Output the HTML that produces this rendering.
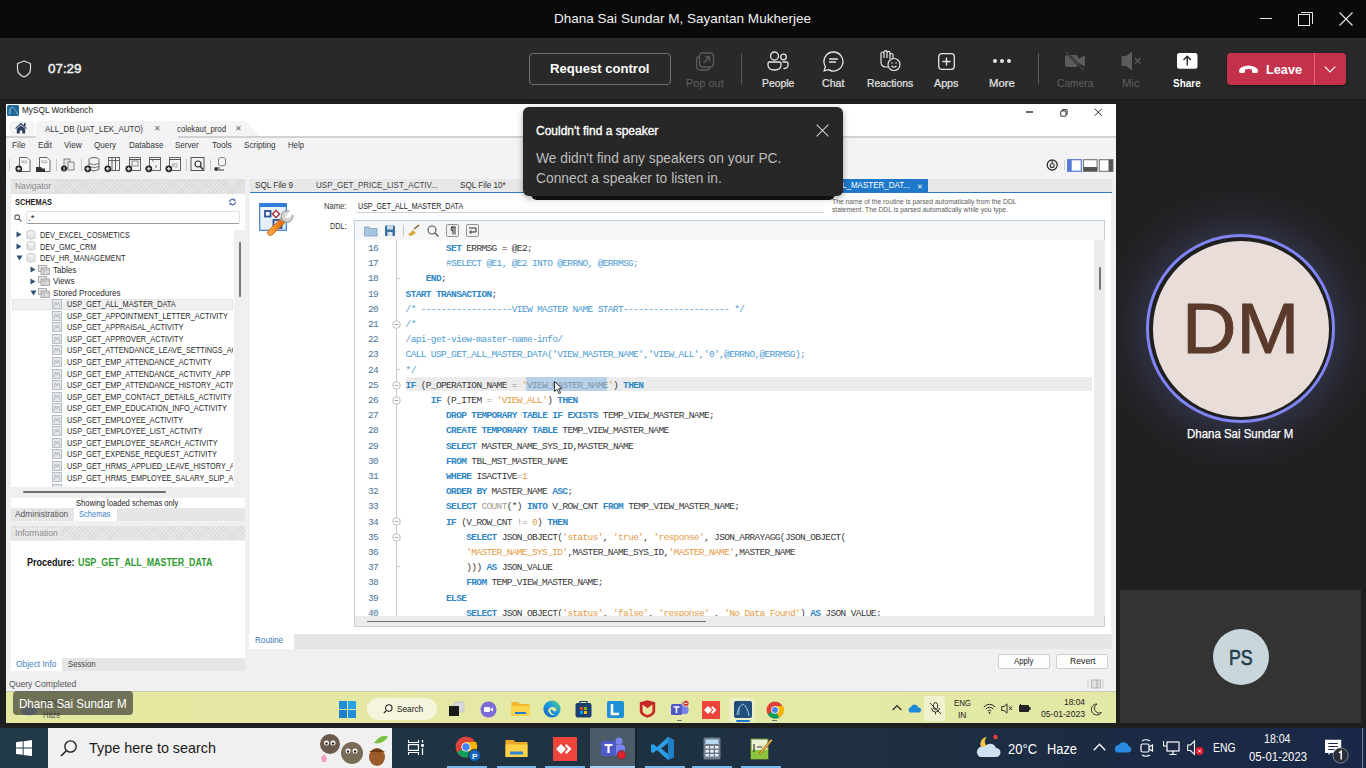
<!DOCTYPE html><html><head><meta charset="utf-8"><style>
html,body{margin:0;padding:0;width:1366px;height:768px;overflow:hidden;background:#1f1f1f;position:relative;font-family:"Liberation Sans",sans-serif}
</style></head><body>
<div style="position:absolute;left:0px;top:0px;width:1366px;height:38px;background:#0a0a0a"></div>
<div style="position:absolute;left:0px;top:38px;width:1366px;height:61px;background:#292929"></div>
<div style="position:absolute;left:554.00px;top:10.12px;line-height:18px;font-size:13.5px;font-family:'Liberation Sans', sans-serif;font-weight:400;color:#f0f0f0;letter-spacing:0.000px;white-space:pre;transform:scaleX(1.0013);transform-origin:0 0;">Dhana Sai Sundar M, Sayantan Mukherjee</div>
<div style="position:absolute;left:1260px;top:18px;width:12px;height:1px;background:#e6e6e6"></div>
<svg style="position:absolute;left:1298px;top:11px" width="16" height="16" viewBox="0 0 16 16"><rect x="0.5" y="3.5" width="11" height="11" fill="none" stroke="#e6e6e6"/><path d="M3 1.5H14.5V13" fill="none" stroke="#e6e6e6"/></svg>
<svg style="position:absolute;left:1339px;top:12px" width="14" height="14" viewBox="0 0 14 14"><path d="M0.5 0.5L13.5 13.5M13.5 0.5L0.5 13.5" stroke="#e6e6e6" stroke-width="1.1"/></svg>
<svg style="position:absolute;left:16px;top:60px" width="16" height="18" viewBox="0 0 16 18"><path d="M8 1 L14.5 3.6 V9 C14.5 12.8 11.6 15.6 8 17 C4.4 15.6 1.5 12.8 1.5 9 V3.6 Z" fill="none" stroke="#e8e8e8" stroke-width="1.1"/></svg>
<div style="position:absolute;left:47.50px;top:60.22px;line-height:18px;font-size:13.5px;font-family:'Liberation Sans', sans-serif;font-weight:400;color:#f2f2f2;letter-spacing:0.000px;white-space:pre;transform:scaleX(0.9916);transform-origin:0 0;-webkit-text-stroke:0.45px #f2f2f2;">07:29</div>
<div style="position:absolute;left:529px;top:53px;width:140px;height:30px;border:1px solid #6e6e6e;border-radius:4px"></div>
<div style="position:absolute;left:550.00px;top:60.02px;line-height:18px;font-size:13.5px;font-family:'Liberation Sans', sans-serif;font-weight:700;color:#ffffff;letter-spacing:0.000px;white-space:pre;transform:scaleX(0.9683);transform-origin:0 0;">Request control</div>
<div style="position:absolute;left:685.50px;top:75.76px;line-height:14px;font-size:10.8px;font-family:'Liberation Sans', sans-serif;font-weight:400;color:#5f5f5f;letter-spacing:0.000px;white-space:pre;transform:scaleX(1.0126);transform-origin:0 0;">Pop out</div>
<div style="position:absolute;left:741px;top:53px;width:1px;height:31px;background:#5a5a5a"></div>
<div style="position:absolute;left:761.70px;top:75.76px;line-height:14px;font-size:10.8px;font-family:'Liberation Sans', sans-serif;font-weight:400;color:#e6e6e6;letter-spacing:0.000px;white-space:pre;transform:scaleX(0.9604);transform-origin:0 0;-webkit-text-stroke:0.2px #e6e6e6;">People</div>
<div style="position:absolute;left:822.30px;top:75.76px;line-height:14px;font-size:10.8px;font-family:'Liberation Sans', sans-serif;font-weight:400;color:#e6e6e6;letter-spacing:0.000px;white-space:pre;transform:scaleX(0.9819);transform-origin:0 0;-webkit-text-stroke:0.2px #e6e6e6;">Chat</div>
<div style="position:absolute;left:866.60px;top:75.76px;line-height:14px;font-size:10.8px;font-family:'Liberation Sans', sans-serif;font-weight:400;color:#e6e6e6;letter-spacing:0.000px;white-space:pre;transform:scaleX(0.9599);transform-origin:0 0;-webkit-text-stroke:0.2px #e6e6e6;">Reactions</div>
<div style="position:absolute;left:933.80px;top:75.76px;line-height:14px;font-size:10.8px;font-family:'Liberation Sans', sans-serif;font-weight:400;color:#e6e6e6;letter-spacing:0.000px;white-space:pre;transform:scaleX(0.9912);transform-origin:0 0;-webkit-text-stroke:0.2px #e6e6e6;">Apps</div>
<div style="position:absolute;left:989.00px;top:75.76px;line-height:14px;font-size:10.8px;font-family:'Liberation Sans', sans-serif;font-weight:400;color:#e6e6e6;letter-spacing:0.000px;white-space:pre;transform:scaleX(1.0485);transform-origin:0 0;-webkit-text-stroke:0.2px #e6e6e6;">More</div>
<div style="position:absolute;left:1038px;top:53px;width:1px;height:31px;background:#5a5a5a"></div>
<div style="position:absolute;left:1056.80px;top:75.76px;line-height:14px;font-size:10.8px;font-family:'Liberation Sans', sans-serif;font-weight:400;color:#5f5f5f;letter-spacing:0.000px;white-space:pre;transform:scaleX(0.9502);transform-origin:0 0;">Camera</div>
<div style="position:absolute;left:1122.30px;top:75.76px;line-height:14px;font-size:10.8px;font-family:'Liberation Sans', sans-serif;font-weight:400;color:#5f5f5f;letter-spacing:0.000px;white-space:pre;transform:scaleX(1.0538);transform-origin:0 0;">Mic</div>
<div style="position:absolute;left:1173.00px;top:75.76px;line-height:14px;font-size:10.8px;font-family:'Liberation Sans', sans-serif;font-weight:700;color:#ffffff;letter-spacing:0.000px;white-space:pre;transform:scaleX(0.9228);transform-origin:0 0;">Share</div>
<div style="position:absolute;left:1227px;top:53px;width:119px;height:32px;background:#c4314b;border-radius:4px;box-shadow:0 1px 3px rgba(0,0,0,.4)"></div>
<div style="position:absolute;left:1314px;top:53px;width:1px;height:32px;background:#e8647a"></div>
<div style="position:absolute;left:1266.00px;top:60.52px;line-height:18px;font-size:13.5px;font-family:'Liberation Sans', sans-serif;font-weight:700;color:#ffffff;letter-spacing:0.000px;white-space:pre;transform:scaleX(0.9404);transform-origin:0 0;">Leave</div>
<div style="position:absolute;left:1116px;top:99px;width:250px;height:629px;background:#1f1f1f"></div>
<div style="position:absolute;left:6px;top:104px;width:1110px;height:619px;background:#f0f0f3"></div>
<div style="position:absolute;left:6px;top:104px;width:1110px;height:33px;background:#ffffff"></div>
<div style="position:absolute;left:6px;top:104px;width:1110px;height:17px;background:#ffffff"></div>
<svg style="position:absolute;left:7px;top:105px" width="12" height="11" viewBox="0 0 12 11"><rect x="0" y="0" width="12" height="11" rx="1.5" fill="#1f6a96"/><path d="M2 9 C3 5 4 3 5 2 C7 3 9 5 10.5 9.5" fill="none" stroke="#8fc3e0" stroke-width="0.9"/><path d="M3 9.5 L3 3" stroke="#8fc3e0" stroke-width="0.7"/></svg>
<div style="position:absolute;left:22.00px;top:104.38px;line-height:12px;font-size:9px;font-family:'Liberation Sans', sans-serif;font-weight:400;color:#1a1a1a;letter-spacing:0.000px;white-space:pre;transform:scaleX(0.9158);transform-origin:0 0;">MySQL Workbench</div>
<div style="position:absolute;left:1026.4px;top:111.3px;width:7px;height:1.4px;background:#666"></div>
<svg style="position:absolute;left:1059.5px;top:108.5px" width="8" height="8" viewBox="0 0 8 8"><rect x="0.7" y="2" width="5.3" height="5.3" rx="1" fill="none" stroke="#444" stroke-width="1.1"/><path d="M2.2 2V1.5Q2.2 0.6 3 0.6H6.2Q7.2 0.6 7.2 1.6V4.8Q7.2 5.7 6.2 5.7" fill="none" stroke="#444" stroke-width="1.1"/></svg>
<svg style="position:absolute;left:1093.5px;top:108.3px" width="8.5" height="8.5" viewBox="0 0 8.5 8.5"><path d="M0.6 0.6L7.9 7.9M7.9 0.6L0.6 7.9" stroke="#333" stroke-width="1"/></svg>
<div style="position:absolute;left:6px;top:121px;width:1110px;height:16px;background:#ffffff"></div>
<div style="position:absolute;left:9px;top:121px;width:26px;height:16px;background:#f4f4f4;border-radius:5px 5px 0 0"></div>
<svg style="position:absolute;left:14px;top:122px" width="14" height="12" viewBox="0 0 14 12"><path d="M7 0.8 L0.8 6.5 L2.3 6.5 L7 2.6 L11.7 6.5 L13.2 6.5 Z" fill="#2d3f5f"/><path d="M2.8 6.8 L7 3.4 L11.2 6.8 V11.5 H8.3 V8.5 H5.7 V11.5 H2.8 Z" fill="#2d3f5f"/><rect x="10" y="1" width="1.6" height="3" fill="#2d3f5f"/></svg>
<svg style="position:absolute;left:36px;top:121px" width="145" height="17" viewBox="0 0 145 17"><path d="M0 17 V4 Q0 0 5 0 H127 Q131 0 133 2 L145 17 Z" fill="#f3f3f6"/></svg>
<svg style="position:absolute;left:168px;top:121px" width="92" height="17" viewBox="0 0 92 17"><path d="M0 0 H74 Q78 0 80 2 L92 16 H12 Z" fill="#f4f4f4"/></svg>
<div style="position:absolute;left:6px;top:136px;width:30px;height:1.5px;background:#d2d2d2"></div>
<div style="position:absolute;left:178px;top:136px;width:938px;height:1.5px;background:#d2d2d2"></div>
<div style="position:absolute;left:45.00px;top:122.51px;line-height:12px;font-size:9.5px;font-family:'Liberation Sans', sans-serif;font-weight:400;color:#333;letter-spacing:0.000px;white-space:pre;transform:scaleX(0.8348);transform-origin:0 0;">ALL_DB (UAT_LEK_AUTO)</div>
<div style="position:absolute;left:153.50px;top:123.73px;line-height:10px;font-size:8px;font-family:'Liberation Sans', sans-serif;font-weight:400;color:#666;letter-spacing:0.000px;white-space:pre;">✕</div>
<div style="position:absolute;left:177.30px;top:122.51px;line-height:12px;font-size:9.5px;font-family:'Liberation Sans', sans-serif;font-weight:400;color:#333;letter-spacing:0.000px;white-space:pre;transform:scaleX(0.8210);transform-origin:0 0;">colekaut_prod</div>
<div style="position:absolute;left:234.50px;top:123.73px;line-height:10px;font-size:8px;font-family:'Liberation Sans', sans-serif;font-weight:400;color:#666;letter-spacing:0.000px;white-space:pre;">✕</div>
<div style="position:absolute;left:6px;top:137.5px;width:1110px;height:41px;background:#f3f3f6"></div>
<div style="position:absolute;left:11.90px;top:139.21px;line-height:12px;font-size:9.5px;font-family:'Liberation Sans', sans-serif;font-weight:400;color:#333;letter-spacing:0.000px;white-space:pre;transform:scaleX(0.8819);transform-origin:0 0;">File</div>
<div style="position:absolute;left:37.80px;top:139.21px;line-height:12px;font-size:9.5px;font-family:'Liberation Sans', sans-serif;font-weight:400;color:#333;letter-spacing:0.000px;white-space:pre;transform:scaleX(0.8491);transform-origin:0 0;">Edit</div>
<div style="position:absolute;left:64.20px;top:139.21px;line-height:12px;font-size:9.5px;font-family:'Liberation Sans', sans-serif;font-weight:400;color:#333;letter-spacing:0.000px;white-space:pre;transform:scaleX(0.8717);transform-origin:0 0;">View</div>
<div style="position:absolute;left:94.00px;top:139.21px;line-height:12px;font-size:9.5px;font-family:'Liberation Sans', sans-serif;font-weight:400;color:#333;letter-spacing:0.000px;white-space:pre;transform:scaleX(0.8581);transform-origin:0 0;">Query</div>
<div style="position:absolute;left:128.60px;top:139.21px;line-height:12px;font-size:9.5px;font-family:'Liberation Sans', sans-serif;font-weight:400;color:#333;letter-spacing:0.000px;white-space:pre;transform:scaleX(0.8459);transform-origin:0 0;">Database</div>
<div style="position:absolute;left:174.90px;top:139.21px;line-height:12px;font-size:9.5px;font-family:'Liberation Sans', sans-serif;font-weight:400;color:#333;letter-spacing:0.000px;white-space:pre;transform:scaleX(0.8434);transform-origin:0 0;">Server</div>
<div style="position:absolute;left:212.00px;top:139.21px;line-height:12px;font-size:9.5px;font-family:'Liberation Sans', sans-serif;font-weight:400;color:#333;letter-spacing:0.000px;white-space:pre;transform:scaleX(0.8928);transform-origin:0 0;">Tools</div>
<div style="position:absolute;left:243.80px;top:139.21px;line-height:12px;font-size:9.5px;font-family:'Liberation Sans', sans-serif;font-weight:400;color:#333;letter-spacing:0.000px;white-space:pre;transform:scaleX(0.8549);transform-origin:0 0;">Scripting</div>
<div style="position:absolute;left:288.00px;top:139.21px;line-height:12px;font-size:9.5px;font-family:'Liberation Sans', sans-serif;font-weight:400;color:#333;letter-spacing:0.000px;white-space:pre;transform:scaleX(0.8189);transform-origin:0 0;">Help</div>
<svg style="position:absolute;left:15px;top:156px" width="17" height="17" viewBox="0 0 17 17"><path d="M4.5 1.5 H12 L15 4.5 V15.5 H4.5 Z" fill="#fafafa" stroke="#555" stroke-width="0.9"/><text x="6" y="6.5" font-size="3.5" fill="#666" font-family="Liberation Sans">SQL</text><circle cx="3.8" cy="12.8" r="3.4" fill="#2a2a2a"/><path d="M2 12.8H5.6M3.8 11V14.6" stroke="#fff" stroke-width="1"/></svg>
<svg style="position:absolute;left:35px;top:156px" width="17" height="17" viewBox="0 0 17 17"><path d="M4.5 1.5 H12 L15 4.5 V15.5 H4.5 Z" fill="#fafafa" stroke="#555" stroke-width="0.9"/><text x="6" y="6.5" font-size="3.5" fill="#666" font-family="Liberation Sans">SQL</text><path d="M1 11 H6 L7 12.5 H10 V16 H1 Z" fill="#333"/></svg>
<svg style="position:absolute;left:59px;top:156px" width="17" height="17" viewBox="0 0 17 17"><rect x="5" y="3" width="6" height="9" fill="#e6e6e6" stroke="#666" stroke-width="0.8"/><rect x="9" y="6" width="6" height="8" fill="#eee" stroke="#666" stroke-width="0.8"/><circle cx="5" cy="12.5" r="3" fill="#222"/><rect x="4.6" y="11" width="0.9" height="3.5" fill="#fff"/></svg>
<svg style="position:absolute;left:84px;top:156px" width="17" height="17" viewBox="0 0 17 17"><ellipse cx="10" cy="3.5" rx="5" ry="2" fill="#f3f3f3" stroke="#555" stroke-width="0.9"/><path d="M5 3.5 V13.5 Q10 16.5 15 13.5 V3.5" fill="#f3f3f3" stroke="#555" stroke-width="0.9"/><path d="M5 7.5 Q10 10 15 7.5 M5 10.5 Q10 13 15 10.5" fill="none" stroke="#555" stroke-width="0.8"/><circle cx="3.8" cy="12.8" r="3.4" fill="#2a2a2a"/><path d="M2 12.8H5.6M3.8 11V14.6" stroke="#fff" stroke-width="1"/></svg>
<svg style="position:absolute;left:104px;top:156px" width="17" height="17" viewBox="0 0 17 17"><rect x="4.5" y="1.5" width="11" height="13" fill="#f3f3f3" stroke="#555" stroke-width="0.9"/><path d="M8 1.5V14.5M11.5 1.5V14.5M4.5 4.5H15.5" stroke="#555" stroke-width="0.9"/><circle cx="3.8" cy="12.8" r="3.4" fill="#2a2a2a"/><path d="M2 12.8H5.6M3.8 11V14.6" stroke="#fff" stroke-width="1"/></svg>
<svg style="position:absolute;left:125px;top:156px" width="17" height="17" viewBox="0 0 17 17"><rect x="4.5" y="1.5" width="11" height="13" fill="#f3f3f3" stroke="#555" stroke-width="0.9"/><rect x="7" y="5" width="6" height="5" fill="none" stroke="#777" stroke-width="0.8"/><path d="M4.5 3.5H15.5" stroke="#555"/><circle cx="3.8" cy="12.8" r="3.4" fill="#2a2a2a"/><path d="M2 12.8H5.6M3.8 11V14.6" stroke="#fff" stroke-width="1"/></svg>
<svg style="position:absolute;left:145px;top:156px" width="17" height="17" viewBox="0 0 17 17"><rect x="4.5" y="1.5" width="11" height="13" fill="#f3f3f3" stroke="#555" stroke-width="0.9"/><path d="M7 4 L9 6 M11 9 V12" stroke="#777" stroke-width="0.9"/><path d="M4.5 3.5H15.5" stroke="#555"/><circle cx="3.8" cy="12.8" r="3.4" fill="#2a2a2a"/><path d="M2 12.8H5.6M3.8 11V14.6" stroke="#fff" stroke-width="1"/></svg>
<svg style="position:absolute;left:165px;top:156px" width="17" height="17" viewBox="0 0 17 17"><rect x="4.5" y="1.5" width="11" height="13" fill="#f3f3f3" stroke="#555" stroke-width="0.9"/><text x="7" y="11" font-size="6" fill="#777" font-family="Liberation Sans">f()</text><path d="M4.5 3.5H15.5" stroke="#555"/><circle cx="3.8" cy="12.8" r="3.4" fill="#2a2a2a"/><path d="M2 12.8H5.6M3.8 11V14.6" stroke="#fff" stroke-width="1"/></svg>
<svg style="position:absolute;left:189px;top:156px" width="17" height="17" viewBox="0 0 17 17"><rect x="2" y="1.5" width="13" height="13" fill="#f3f3f3" stroke="#555" stroke-width="1"/><circle cx="9" cy="8" r="3" fill="none" stroke="#333" stroke-width="1.2"/><path d="M11 10 L14 13.5" stroke="#333" stroke-width="1.5"/></svg>
<svg style="position:absolute;left:212px;top:156px" width="17" height="17" viewBox="0 0 17 17"><ellipse cx="10" cy="3" rx="3.5" ry="1.5" fill="#f3f3f3" stroke="#666" stroke-width="0.8"/><path d="M6.5 3 V9 Q10 11 13.5 9 V3" fill="#f3f3f3" stroke="#666" stroke-width="0.8"/><path d="M3 12 L8 12 M3 14 L12 14" stroke="#333" stroke-width="1"/><circle cx="4" cy="13" r="1.8" fill="#333"/></svg>
<div style="position:absolute;left:8.5px;top:159px;width:1px;height:12px;background:#c8c8c8"></div>
<div style="position:absolute;left:55.5px;top:159px;width:1px;height:12px;background:#c8c8c8"></div>
<div style="position:absolute;left:80.5px;top:159px;width:1px;height:12px;background:#c8c8c8"></div>
<div style="position:absolute;left:186px;top:159px;width:1px;height:12px;background:#c8c8c8"></div>
<div style="position:absolute;left:209.5px;top:159px;width:1px;height:12px;background:#c8c8c8"></div>
<div style="position:absolute;left:10.5px;top:178.5px;width:234.5px;height:15.5px;background:#e6e6e6;background-image:repeating-linear-gradient(45deg,rgba(0,0,0,.035) 0 1px,transparent 1px 3px),repeating-linear-gradient(-45deg,rgba(0,0,0,.035) 0 1px,transparent 1px 3px)"></div>
<div style="position:absolute;left:12px;top:180.5px;width:42px;height:11px;background:#e6e6e6"></div>
<div style="position:absolute;left:15.20px;top:180.21px;line-height:12px;font-size:9.5px;font-family:'Liberation Sans', sans-serif;font-weight:400;color:#8a8a8a;letter-spacing:0.000px;white-space:pre;transform:scaleX(0.8854);transform-origin:0 0;">Navigator</div>
<div style="position:absolute;left:10.5px;top:194px;width:234.5px;height:293px;background:#ffffff"></div>
<div style="position:absolute;left:14.90px;top:196.08px;line-height:12px;font-size:9.3px;font-family:'Liberation Sans', sans-serif;font-weight:700;color:#1a1a1a;letter-spacing:0.000px;white-space:pre;transform:scaleX(0.7934);transform-origin:0 0;">SCHEMAS</div>
<svg style="position:absolute;left:228px;top:198px" width="9" height="8" viewBox="0 0 9 8"><path d="M1.5 4 A3 3 0 0 1 7 2.5 M7.5 4 A3 3 0 0 1 2 5.5" fill="none" stroke="#4a6fa5" stroke-width="1.3"/><path d="M6 0.5 L8 2.8 L5.5 3.3Z M3 7.5 L1 5.2 L3.5 4.7Z" fill="#4a6fa5"/></svg>
<svg style="position:absolute;left:14px;top:214px" width="8" height="8" viewBox="0 0 8 8"><circle cx="3.2" cy="3.2" r="2.3" fill="none" stroke="#666" stroke-width="1.1"/><path d="M5 5 L7.5 7.5" stroke="#666" stroke-width="1.3"/></svg>
<div style="position:absolute;left:25.7px;top:211px;width:214.5px;height:13px;background:#fff;border:1px solid #e0e0e0;border-bottom:1.5px solid #9a9a9a;box-sizing:border-box;border-radius:2px"></div>
<div style="position:absolute;left:28.00px;top:212.21px;line-height:12px;font-size:9.5px;font-family:'Liberation Sans', sans-serif;font-weight:400;color:#222;letter-spacing:0.000px;white-space:pre;">.*</div>
<div style="position:absolute;left:234px;top:229.5px;width:11px;height:257px;background:#efefef"></div>
<div style="position:absolute;left:238.8px;top:241.6px;width:2px;height:55.7px;background:#777;border-radius:1px"></div>
<div style="position:absolute;left:11.5px;top:299px;width:221px;height:11px;background:#f0f0f0;border:1px solid #e4e4e4;box-sizing:border-box"></div>
<div style="position:absolute;left:10.5px;top:229.5px;width:222px;height:257px;overflow:hidden">

<svg style="position:absolute;left:5.0px;top:1.9000000000000057px" width="6" height="7" viewBox="0 0 6 7"><path d="M0.5 0.5 V6.5 L5.5 3.5Z" fill="#2f4f73"/></svg>
<svg style="position:absolute;left:15.0px;top:0.4000000000000057px" width="10" height="10" viewBox="0 0 10 10"><ellipse cx="5" cy="2" rx="4" ry="1.5" fill="#f2f2f2" stroke="#bbb" stroke-width="0.8"/><path d="M1 2 V8 Q5 10.5 9 8 V2" fill="#f2f2f2" stroke="#bbb" stroke-width="0.8"/><path d="M1 4.5 Q5 6.5 9 4.5 M1 6.5 Q5 8.5 9 6.5" fill="none" stroke="#ccc" stroke-width="0.6"/></svg>
<div style="position:absolute;left:29.10px;top:-0.52px;line-height:12px;font-size:9px;font-family:'Liberation Sans', sans-serif;font-weight:400;color:#2a2a2a;letter-spacing:0.000px;white-space:pre;transform:scaleX(0.8050);transform-origin:0 0;">DEV_EXCEL_COSMETICS</div>

<svg style="position:absolute;left:5.0px;top:13.450000000000017px" width="6" height="7" viewBox="0 0 6 7"><path d="M0.5 0.5 V6.5 L5.5 3.5Z" fill="#2f4f73"/></svg>
<svg style="position:absolute;left:15.0px;top:11.950000000000017px" width="10" height="10" viewBox="0 0 10 10"><ellipse cx="5" cy="2" rx="4" ry="1.5" fill="#f2f2f2" stroke="#bbb" stroke-width="0.8"/><path d="M1 2 V8 Q5 10.5 9 8 V2" fill="#f2f2f2" stroke="#bbb" stroke-width="0.8"/><path d="M1 4.5 Q5 6.5 9 4.5 M1 6.5 Q5 8.5 9 6.5" fill="none" stroke="#ccc" stroke-width="0.6"/></svg>
<div style="position:absolute;left:29.10px;top:11.03px;line-height:12px;font-size:9px;font-family:'Liberation Sans', sans-serif;font-weight:400;color:#2a2a2a;letter-spacing:0.000px;white-space:pre;transform:scaleX(0.8050);transform-origin:0 0;">DEV_GMC_CRM</div>

<svg style="position:absolute;left:5.0px;top:25.5px" width="7" height="6" viewBox="0 0 7 6"><path d="M0.5 0.5 H6.5 L3.5 5.5Z" fill="#2f4f73"/></svg>
<svg style="position:absolute;left:15.0px;top:23.5px" width="10" height="10" viewBox="0 0 10 10"><ellipse cx="5" cy="2" rx="4" ry="1.5" fill="#f2f2f2" stroke="#bbb" stroke-width="0.8"/><path d="M1 2 V8 Q5 10.5 9 8 V2" fill="#f2f2f2" stroke="#bbb" stroke-width="0.8"/><path d="M1 4.5 Q5 6.5 9 4.5 M1 6.5 Q5 8.5 9 6.5" fill="none" stroke="#ccc" stroke-width="0.6"/></svg>
<div style="position:absolute;left:29.10px;top:22.58px;line-height:12px;font-size:9px;font-family:'Liberation Sans', sans-serif;font-weight:400;color:#2a2a2a;letter-spacing:0.000px;white-space:pre;transform:scaleX(0.8050);transform-origin:0 0;">DEV_HR_MANAGEMENT</div>
<svg style="position:absolute;left:19.0px;top:36.55000000000001px" width="6" height="7" viewBox="0 0 6 7"><path d="M0.5 0.5 V6.5 L5.5 3.5Z" fill="#2f4f73"/></svg>
<svg style="position:absolute;left:27.0px;top:35.05000000000001px" width="12" height="10" viewBox="0 0 12 10"><rect x="0.5" y="0.5" width="8" height="6" fill="#e8e8e8" stroke="#999" stroke-width="0.8"/><rect x="3" y="3" width="8.5" height="6.5" fill="#dcdcdc" stroke="#999" stroke-width="0.8"/><path d="M3 5H11.5 M6 3V9.5" stroke="#aaa" stroke-width="0.6"/></svg>
<div style="position:absolute;left:42.50px;top:34.13px;line-height:12px;font-size:9px;font-family:'Liberation Sans', sans-serif;font-weight:400;color:#2a2a2a;letter-spacing:0.000px;white-space:pre;transform:scaleX(0.9000);transform-origin:0 0;">Tables</div>
<svg style="position:absolute;left:19.0px;top:48.10000000000002px" width="6" height="7" viewBox="0 0 6 7"><path d="M0.5 0.5 V6.5 L5.5 3.5Z" fill="#2f4f73"/></svg>
<svg style="position:absolute;left:27.0px;top:46.60000000000002px" width="12" height="10" viewBox="0 0 12 10"><rect x="0.5" y="0.5" width="8" height="6" fill="#e8e8e8" stroke="#999" stroke-width="0.8"/><rect x="3" y="3" width="8.5" height="6.5" fill="#dcdcdc" stroke="#999" stroke-width="0.8"/><path d="M3 5H11.5 M6 3V9.5" stroke="#aaa" stroke-width="0.6"/></svg>
<div style="position:absolute;left:42.50px;top:45.68px;line-height:12px;font-size:9px;font-family:'Liberation Sans', sans-serif;font-weight:400;color:#2a2a2a;letter-spacing:0.000px;white-space:pre;transform:scaleX(0.9000);transform-origin:0 0;">Views</div>
<svg style="position:absolute;left:19.0px;top:60.14999999999998px" width="7" height="6" viewBox="0 0 7 6"><path d="M0.5 0.5 H6.5 L3.5 5.5Z" fill="#2f4f73"/></svg>
<svg style="position:absolute;left:27.0px;top:58.14999999999998px" width="12" height="10" viewBox="0 0 12 10"><rect x="0.5" y="0.5" width="8" height="6" fill="#e8e8e8" stroke="#999" stroke-width="0.8"/><rect x="3" y="3" width="8.5" height="6.5" fill="#dcdcdc" stroke="#999" stroke-width="0.8"/><path d="M3 5H11.5 M6 3V9.5" stroke="#aaa" stroke-width="0.6"/></svg>
<div style="position:absolute;left:42.50px;top:57.23px;line-height:12px;font-size:9px;font-family:'Liberation Sans', sans-serif;font-weight:400;color:#2a2a2a;letter-spacing:0.000px;white-space:pre;transform:scaleX(0.9000);transform-origin:0 0;">Stored Procedures</div>
<svg style="position:absolute;left:41.5px;top:69.70000000000005px" width="10" height="10" viewBox="0 0 10 10"><rect x="0.5" y="0.5" width="9" height="9" fill="#e4e7eb" stroke="#a8b0ba" stroke-width="0.8"/><path d="M2 8 L3.5 3 L5 6 L6.5 3 L8 8" fill="none" stroke="#a0a8b2" stroke-width="0.7"/></svg>
<div style="position:absolute;left:56.20px;top:68.78px;line-height:12px;font-size:9px;font-family:'Liberation Sans', sans-serif;font-weight:400;color:#2a2a2a;letter-spacing:0.000px;white-space:pre;transform:scaleX(0.8160);transform-origin:0 0;">USP_GET_ALL_MASTER_DATA</div>
<svg style="position:absolute;left:41.5px;top:81.25px" width="10" height="10" viewBox="0 0 10 10"><rect x="0.5" y="0.5" width="9" height="9" fill="#e4e7eb" stroke="#a8b0ba" stroke-width="0.8"/><path d="M2 8 L3.5 3 L5 6 L6.5 3 L8 8" fill="none" stroke="#a0a8b2" stroke-width="0.7"/></svg>
<div style="position:absolute;left:56.20px;top:80.33px;line-height:12px;font-size:9px;font-family:'Liberation Sans', sans-serif;font-weight:400;color:#2a2a2a;letter-spacing:0.000px;white-space:pre;transform:scaleX(0.8160);transform-origin:0 0;">USP_GET_APPOINTMENT_LETTER_ACTIVITY</div>
<svg style="position:absolute;left:41.5px;top:92.80000000000001px" width="10" height="10" viewBox="0 0 10 10"><rect x="0.5" y="0.5" width="9" height="9" fill="#e4e7eb" stroke="#a8b0ba" stroke-width="0.8"/><path d="M2 8 L3.5 3 L5 6 L6.5 3 L8 8" fill="none" stroke="#a0a8b2" stroke-width="0.7"/></svg>
<div style="position:absolute;left:56.20px;top:91.88px;line-height:12px;font-size:9px;font-family:'Liberation Sans', sans-serif;font-weight:400;color:#2a2a2a;letter-spacing:0.000px;white-space:pre;transform:scaleX(0.8160);transform-origin:0 0;">USP_GET_APPRAISAL_ACTIVITY</div>
<svg style="position:absolute;left:41.5px;top:104.35000000000002px" width="10" height="10" viewBox="0 0 10 10"><rect x="0.5" y="0.5" width="9" height="9" fill="#e4e7eb" stroke="#a8b0ba" stroke-width="0.8"/><path d="M2 8 L3.5 3 L5 6 L6.5 3 L8 8" fill="none" stroke="#a0a8b2" stroke-width="0.7"/></svg>
<div style="position:absolute;left:56.20px;top:103.43px;line-height:12px;font-size:9px;font-family:'Liberation Sans', sans-serif;font-weight:400;color:#2a2a2a;letter-spacing:0.000px;white-space:pre;transform:scaleX(0.8160);transform-origin:0 0;">USP_GET_APPROVER_ACTIVITY</div>
<svg style="position:absolute;left:41.5px;top:115.89999999999998px" width="10" height="10" viewBox="0 0 10 10"><rect x="0.5" y="0.5" width="9" height="9" fill="#e4e7eb" stroke="#a8b0ba" stroke-width="0.8"/><path d="M2 8 L3.5 3 L5 6 L6.5 3 L8 8" fill="none" stroke="#a0a8b2" stroke-width="0.7"/></svg>
<div style="position:absolute;left:56.20px;top:114.98px;line-height:12px;font-size:9px;font-family:'Liberation Sans', sans-serif;font-weight:400;color:#2a2a2a;letter-spacing:0.000px;white-space:pre;transform:scaleX(0.8160);transform-origin:0 0;">USP_GET_ATTENDANCE_LEAVE_SETTINGS_ACTIVITY</div>
<svg style="position:absolute;left:41.5px;top:127.45000000000005px" width="10" height="10" viewBox="0 0 10 10"><rect x="0.5" y="0.5" width="9" height="9" fill="#e4e7eb" stroke="#a8b0ba" stroke-width="0.8"/><path d="M2 8 L3.5 3 L5 6 L6.5 3 L8 8" fill="none" stroke="#a0a8b2" stroke-width="0.7"/></svg>
<div style="position:absolute;left:56.20px;top:126.53px;line-height:12px;font-size:9px;font-family:'Liberation Sans', sans-serif;font-weight:400;color:#2a2a2a;letter-spacing:0.000px;white-space:pre;transform:scaleX(0.8160);transform-origin:0 0;">USP_GET_EMP_ATTENDANCE_ACTIVITY</div>
<svg style="position:absolute;left:41.5px;top:139.0px" width="10" height="10" viewBox="0 0 10 10"><rect x="0.5" y="0.5" width="9" height="9" fill="#e4e7eb" stroke="#a8b0ba" stroke-width="0.8"/><path d="M2 8 L3.5 3 L5 6 L6.5 3 L8 8" fill="none" stroke="#a0a8b2" stroke-width="0.7"/></svg>
<div style="position:absolute;left:56.20px;top:138.08px;line-height:12px;font-size:9px;font-family:'Liberation Sans', sans-serif;font-weight:400;color:#2a2a2a;letter-spacing:0.000px;white-space:pre;transform:scaleX(0.8160);transform-origin:0 0;">USP_GET_EMP_ATTENDANCE_ACTIVITY_APP</div>
<svg style="position:absolute;left:41.5px;top:150.55px" width="10" height="10" viewBox="0 0 10 10"><rect x="0.5" y="0.5" width="9" height="9" fill="#e4e7eb" stroke="#a8b0ba" stroke-width="0.8"/><path d="M2 8 L3.5 3 L5 6 L6.5 3 L8 8" fill="none" stroke="#a0a8b2" stroke-width="0.7"/></svg>
<div style="position:absolute;left:56.20px;top:149.63px;line-height:12px;font-size:9px;font-family:'Liberation Sans', sans-serif;font-weight:400;color:#2a2a2a;letter-spacing:0.000px;white-space:pre;transform:scaleX(0.8160);transform-origin:0 0;">USP_GET_EMP_ATTENDANCE_HISTORY_ACTIVITY</div>
<svg style="position:absolute;left:41.5px;top:162.10000000000002px" width="10" height="10" viewBox="0 0 10 10"><rect x="0.5" y="0.5" width="9" height="9" fill="#e4e7eb" stroke="#a8b0ba" stroke-width="0.8"/><path d="M2 8 L3.5 3 L5 6 L6.5 3 L8 8" fill="none" stroke="#a0a8b2" stroke-width="0.7"/></svg>
<div style="position:absolute;left:56.20px;top:161.18px;line-height:12px;font-size:9px;font-family:'Liberation Sans', sans-serif;font-weight:400;color:#2a2a2a;letter-spacing:0.000px;white-space:pre;transform:scaleX(0.8160);transform-origin:0 0;">USP_GET_EMP_CONTACT_DETAILS_ACTIVITY</div>
<svg style="position:absolute;left:41.5px;top:173.64999999999998px" width="10" height="10" viewBox="0 0 10 10"><rect x="0.5" y="0.5" width="9" height="9" fill="#e4e7eb" stroke="#a8b0ba" stroke-width="0.8"/><path d="M2 8 L3.5 3 L5 6 L6.5 3 L8 8" fill="none" stroke="#a0a8b2" stroke-width="0.7"/></svg>
<div style="position:absolute;left:56.20px;top:172.73px;line-height:12px;font-size:9px;font-family:'Liberation Sans', sans-serif;font-weight:400;color:#2a2a2a;letter-spacing:0.000px;white-space:pre;transform:scaleX(0.8160);transform-origin:0 0;">USP_GET_EMP_EDUCATION_INFO_ACTIVITY</div>
<svg style="position:absolute;left:41.5px;top:185.20000000000005px" width="10" height="10" viewBox="0 0 10 10"><rect x="0.5" y="0.5" width="9" height="9" fill="#e4e7eb" stroke="#a8b0ba" stroke-width="0.8"/><path d="M2 8 L3.5 3 L5 6 L6.5 3 L8 8" fill="none" stroke="#a0a8b2" stroke-width="0.7"/></svg>
<div style="position:absolute;left:56.20px;top:184.28px;line-height:12px;font-size:9px;font-family:'Liberation Sans', sans-serif;font-weight:400;color:#2a2a2a;letter-spacing:0.000px;white-space:pre;transform:scaleX(0.8160);transform-origin:0 0;">USP_GET_EMPLOYEE_ACTIVITY</div>
<svg style="position:absolute;left:41.5px;top:196.75px" width="10" height="10" viewBox="0 0 10 10"><rect x="0.5" y="0.5" width="9" height="9" fill="#e4e7eb" stroke="#a8b0ba" stroke-width="0.8"/><path d="M2 8 L3.5 3 L5 6 L6.5 3 L8 8" fill="none" stroke="#a0a8b2" stroke-width="0.7"/></svg>
<div style="position:absolute;left:56.20px;top:195.83px;line-height:12px;font-size:9px;font-family:'Liberation Sans', sans-serif;font-weight:400;color:#2a2a2a;letter-spacing:0.000px;white-space:pre;transform:scaleX(0.8160);transform-origin:0 0;">USP_GET_EMPLOYEE_LIST_ACTIVITY</div>
<svg style="position:absolute;left:41.5px;top:208.3px" width="10" height="10" viewBox="0 0 10 10"><rect x="0.5" y="0.5" width="9" height="9" fill="#e4e7eb" stroke="#a8b0ba" stroke-width="0.8"/><path d="M2 8 L3.5 3 L5 6 L6.5 3 L8 8" fill="none" stroke="#a0a8b2" stroke-width="0.7"/></svg>
<div style="position:absolute;left:56.20px;top:207.38px;line-height:12px;font-size:9px;font-family:'Liberation Sans', sans-serif;font-weight:400;color:#2a2a2a;letter-spacing:0.000px;white-space:pre;transform:scaleX(0.8160);transform-origin:0 0;">USP_GET_EMPLOYEE_SEARCH_ACTIVITY</div>
<svg style="position:absolute;left:41.5px;top:219.85000000000002px" width="10" height="10" viewBox="0 0 10 10"><rect x="0.5" y="0.5" width="9" height="9" fill="#e4e7eb" stroke="#a8b0ba" stroke-width="0.8"/><path d="M2 8 L3.5 3 L5 6 L6.5 3 L8 8" fill="none" stroke="#a0a8b2" stroke-width="0.7"/></svg>
<div style="position:absolute;left:56.20px;top:218.93px;line-height:12px;font-size:9px;font-family:'Liberation Sans', sans-serif;font-weight:400;color:#2a2a2a;letter-spacing:0.000px;white-space:pre;transform:scaleX(0.8160);transform-origin:0 0;">USP_GET_EXPENSE_REQUEST_ACTIVITY</div>
<svg style="position:absolute;left:41.5px;top:231.39999999999998px" width="10" height="10" viewBox="0 0 10 10"><rect x="0.5" y="0.5" width="9" height="9" fill="#e4e7eb" stroke="#a8b0ba" stroke-width="0.8"/><path d="M2 8 L3.5 3 L5 6 L6.5 3 L8 8" fill="none" stroke="#a0a8b2" stroke-width="0.7"/></svg>
<div style="position:absolute;left:56.20px;top:230.48px;line-height:12px;font-size:9px;font-family:'Liberation Sans', sans-serif;font-weight:400;color:#2a2a2a;letter-spacing:0.000px;white-space:pre;transform:scaleX(0.8160);transform-origin:0 0;">USP_GET_HRMS_APPLIED_LEAVE_HISTORY_ACTIVITY</div>
<svg style="position:absolute;left:41.5px;top:242.95000000000005px" width="10" height="10" viewBox="0 0 10 10"><rect x="0.5" y="0.5" width="9" height="9" fill="#e4e7eb" stroke="#a8b0ba" stroke-width="0.8"/><path d="M2 8 L3.5 3 L5 6 L6.5 3 L8 8" fill="none" stroke="#a0a8b2" stroke-width="0.7"/></svg>
<div style="position:absolute;left:56.20px;top:242.03px;line-height:12px;font-size:9px;font-family:'Liberation Sans', sans-serif;font-weight:400;color:#2a2a2a;letter-spacing:0.000px;white-space:pre;transform:scaleX(0.8160);transform-origin:0 0;">USP_GET_HRMS_EMPLOYEE_SALARY_SLIP_ACTIVITY</div>
<svg style="position:absolute;left:41.5px;top:254.5px" width="10" height="10" viewBox="0 0 10 10"><rect x="0.5" y="0.5" width="9" height="9" fill="#e4e7eb" stroke="#a8b0ba" stroke-width="0.8"/><path d="M2 8 L3.5 3 L5 6 L6.5 3 L8 8" fill="none" stroke="#a0a8b2" stroke-width="0.7"/></svg>
</div>
<div style="position:absolute;left:10.5px;top:487px;width:234.5px;height:11px;background:#efefef"></div>
<div style="position:absolute;left:22.8px;top:491.3px;width:143.7px;height:1.6px;background:#707070;border-radius:1px"></div>
<div style="position:absolute;left:10.5px;top:498px;width:234.5px;height:9.6px;background:#ffffff"></div>
<div style="position:absolute;left:75.75px;top:497.75px;line-height:11px;font-size:8.8px;font-family:'Liberation Sans', sans-serif;font-weight:400;color:#222;letter-spacing:0.000px;white-space:pre;transform:scaleX(0.8597);transform-origin:0 0;">Showing loaded schemas only</div>
<div style="position:absolute;left:10.5px;top:507.6px;width:234.5px;height:13.4px;background:#e6e6e6"></div>
<div style="position:absolute;left:73.8px;top:507.6px;width:43.2px;height:13.4px;background:#ffffff"></div>
<div style="position:absolute;left:15.20px;top:508.95px;line-height:11px;font-size:8.8px;font-family:'Liberation Sans', sans-serif;font-weight:400;color:#555;letter-spacing:0.000px;white-space:pre;transform:scaleX(0.9559);transform-origin:0 0;">Administration</div>
<div style="position:absolute;left:79.00px;top:508.95px;line-height:11px;font-size:8.8px;font-family:'Liberation Sans', sans-serif;font-weight:400;color:#3d7fbf;letter-spacing:0.000px;white-space:pre;transform:scaleX(0.8560);transform-origin:0 0;">Schemas</div>
<div style="position:absolute;left:10.5px;top:525.7px;width:234.5px;height:14.8px;background:#e8e8e8;background-image:repeating-linear-gradient(45deg,rgba(0,0,0,.035) 0 1px,transparent 1px 3px),repeating-linear-gradient(-45deg,rgba(0,0,0,.035) 0 1px,transparent 1px 3px)"></div>
<div style="position:absolute;left:12px;top:527.5px;width:48px;height:11px;background:#e8e8e8"></div>
<div style="position:absolute;left:15.20px;top:526.78px;line-height:12px;font-size:9.3px;font-family:'Liberation Sans', sans-serif;font-weight:400;color:#8a8a8a;letter-spacing:0.000px;white-space:pre;transform:scaleX(0.9200);transform-origin:0 0;">Information</div>
<div style="position:absolute;left:10.5px;top:540.5px;width:234.5px;height:117.5px;background:#ffffff"></div>
<div style="position:absolute;left:27.00px;top:556.43px;line-height:13px;font-size:10.3px;font-family:'Liberation Sans', sans-serif;font-weight:700;color:#111;letter-spacing:0.000px;white-space:pre;transform:scaleX(0.8753);transform-origin:0 0;">Procedure:</div>
<div style="position:absolute;left:77.70px;top:556.43px;line-height:13px;font-size:10.3px;font-family:'Liberation Sans', sans-serif;font-weight:700;color:#2f9a2f;letter-spacing:0.000px;white-space:pre;transform:scaleX(0.8630);transform-origin:0 0;">USP_GET_ALL_MASTER_DATA</div>
<div style="position:absolute;left:10.5px;top:658px;width:234.5px;height:13.4px;background:#e6e6e6"></div>
<div style="position:absolute;left:10.5px;top:658px;width:51.9px;height:13.4px;background:#ffffff"></div>
<div style="position:absolute;left:15.60px;top:659.05px;line-height:11px;font-size:8.8px;font-family:'Liberation Sans', sans-serif;font-weight:400;color:#3d7fbf;letter-spacing:0.000px;white-space:pre;transform:scaleX(0.9517);transform-origin:0 0;">Object Info</div>
<div style="position:absolute;left:67.60px;top:659.05px;line-height:11px;font-size:8.8px;font-family:'Liberation Sans', sans-serif;font-weight:400;color:#444;letter-spacing:0.000px;white-space:pre;transform:scaleX(0.8816);transform-origin:0 0;">Session</div>
<div style="position:absolute;left:9.10px;top:678.48px;line-height:12px;font-size:9px;font-family:'Liberation Sans', sans-serif;font-weight:400;color:#555;letter-spacing:0.000px;white-space:pre;transform:scaleX(0.9556);transform-origin:0 0;">Query Completed</div>
<div style="position:absolute;left:249.5px;top:178.5px;width:862px;height:14px;background:#e8e8e8"></div>
<div style="position:absolute;left:249.5px;top:191.8px;width:862px;height:1.6px;background:#2a7cc7"></div>
<div style="position:absolute;left:249.5px;top:193.4px;width:861.8px;height:440.7px;background:#ffffff"></div>
<div style="position:absolute;left:254.80px;top:178.98px;line-height:12px;font-size:9.3px;font-family:'Liberation Sans', sans-serif;font-weight:400;color:#333;letter-spacing:0.000px;white-space:pre;transform:scaleX(0.8741);transform-origin:0 0;">SQL File 9</div>
<div style="position:absolute;left:315.80px;top:178.98px;line-height:12px;font-size:9.3px;font-family:'Liberation Sans', sans-serif;font-weight:400;color:#444;letter-spacing:0.000px;white-space:pre;transform:scaleX(0.8628);transform-origin:0 0;">USP_GET_PRICE_LIST_ACTIV...</div>
<div style="position:absolute;left:459.70px;top:178.98px;line-height:12px;font-size:9.3px;font-family:'Liberation Sans', sans-serif;font-weight:400;color:#333;letter-spacing:0.000px;white-space:pre;transform:scaleX(0.8724);transform-origin:0 0;">SQL File 10*</div>
<div style="position:absolute;left:820px;top:178.6px;width:107.6px;height:13.6px;background:#1f78c9"></div>
<div style="position:absolute;left:842.00px;top:178.98px;line-height:12px;font-size:9.3px;font-family:'Liberation Sans', sans-serif;font-weight:400;color:#ffffff;letter-spacing:0.000px;white-space:pre;transform:scaleX(0.8618);transform-origin:0 0;">L_MASTER_DAT...</div>
<div style="position:absolute;left:917.30px;top:182.27px;line-height:9px;font-size:7px;font-family:'Liberation Sans', sans-serif;font-weight:400;color:#ffffff;letter-spacing:0.000px;white-space:pre;">✕</div>
<svg style="position:absolute;left:1046px;top:158.5px" width="13" height="12" viewBox="0 0 13 12"><circle cx="6.2" cy="6" r="5" fill="none" stroke="#333" stroke-width="1.3"/><circle cx="6.2" cy="6.5" r="2" fill="none" stroke="#333" stroke-width="1.1"/><path d="M6.2 1.5V4" stroke="#333" stroke-width="1.1"/></svg>
<div style="position:absolute;left:1064px;top:160px;width:1px;height:10px;background:#d0d0d0"></div>
<svg style="position:absolute;left:1067px;top:158.5px" width="47" height="13" viewBox="0 0 47 13"><rect x="0.7" y="0.7" width="13.6" height="11.6" fill="#fff" stroke="#5878d8" stroke-width="1.2"/><rect x="0.7" y="0.7" width="4" height="11.6" fill="#5878d8"/><rect x="16.5" y="0.7" width="13.6" height="11.6" fill="#fff" stroke="#777" stroke-width="1.1"/><rect x="16.5" y="8" width="13.6" height="4.3" fill="#555"/><rect x="32.3" y="0.7" width="13.6" height="11.6" fill="#fff" stroke="#777" stroke-width="1.1"/><rect x="41.5" y="0.7" width="4.4" height="11.6" fill="#555"/></svg>
<svg style="position:absolute;left:252px;top:196px" width="48" height="48" viewBox="0 0 48 48"><defs><linearGradient id="rg1" x1="0" y1="0" x2="1" y2="1"><stop offset="0" stop-color="#f4f9ff"/><stop offset="1" stop-color="#d6e6f6"/></linearGradient><linearGradient id="rg2" x1="0" y1="0" x2="1" y2="0"><stop offset="0" stop-color="#f7a540"/><stop offset="1" stop-color="#e07010"/></linearGradient></defs><rect x="7.7" y="7.7" width="26.6" height="26.6" fill="url(#rg1)" stroke="#3f7fd0" stroke-width="1.2"/><rect x="7.2" y="7.2" width="27.6" height="3.8" fill="#2f7ddc"/><rect x="13" y="15" width="5.5" height="5.5" fill="#fff" stroke="#2a4f9a" stroke-width="1.8"/><path d="M24 14.5 L27.5 18 L24 21.5 L20.5 18Z" fill="#fff" stroke="#a83838" stroke-width="1.5"/><rect x="21.5" y="24" width="8" height="8" fill="none" stroke="#2a4f9a" stroke-width="1.8"/><path d="M18.5 36.5 L29.5 26" stroke="#d86a10" stroke-width="6.5" stroke-linecap="round"/><path d="M18.5 36.5 L29.5 26" stroke="url(#rg2)" stroke-width="5" stroke-linecap="round"/><path d="M29 24 L32 21" stroke="#b0b0b0" stroke-width="3.5"/><circle cx="35" cy="20.5" r="5.8" fill="#d6d6d6" stroke="#8c8c8c" stroke-width="1"/><path d="M34 19.5 L38.5 14 L42 17.5 L36.5 22Z" fill="#ffffff"/><circle cx="35" cy="20.5" r="1.6" fill="#ffffff"/></svg>
<div style="position:absolute;left:324.30px;top:200.28px;line-height:12px;font-size:9.3px;font-family:'Liberation Sans', sans-serif;font-weight:400;color:#333;letter-spacing:0.000px;white-space:pre;transform:scaleX(0.8178);transform-origin:0 0;">Name:</div>
<div style="position:absolute;left:330.00px;top:219.78px;line-height:12px;font-size:9.3px;font-family:'Liberation Sans', sans-serif;font-weight:400;color:#333;letter-spacing:0.000px;white-space:pre;transform:scaleX(0.7882);transform-origin:0 0;">DDL:</div>
<div style="position:absolute;left:355.8px;top:199px;width:468px;height:13.6px;background:#fdfdfd;border-bottom:1.5px solid #cfcfcf;box-sizing:border-box"></div>
<div style="position:absolute;left:357.80px;top:200.28px;line-height:12px;font-size:9.3px;font-family:'Liberation Sans', sans-serif;font-weight:400;color:#222;letter-spacing:0.000px;white-space:pre;transform:scaleX(0.7642);transform-origin:0 0;">USP_GET_ALL_MASTER_DATA</div>
<div style="position:absolute;left:832.00px;top:197.27px;line-height:9px;font-size:7.3px;font-family:'Liberation Sans', sans-serif;font-weight:400;color:#5a5a5a;letter-spacing:0.000px;white-space:pre;transform:scaleX(0.9266);transform-origin:0 0;">The name of the routine is parsed automatically from the DDL</div>
<div style="position:absolute;left:832.00px;top:204.77px;line-height:9px;font-size:7.3px;font-family:'Liberation Sans', sans-serif;font-weight:400;color:#5a5a5a;letter-spacing:0.000px;white-space:pre;transform:scaleX(0.9190);transform-origin:0 0;">statement. The DDL is parsed automatically while you type.</div>
<div style="position:absolute;left:354.2px;top:219.9px;width:751.3px;height:407.6px;background:#f5f6f8;border:1px solid #c3cedb;box-sizing:border-box"></div>
<div style="position:absolute;left:355.2px;top:240px;width:739px;height:375.7px;background:#ffffff"></div>
<div style="position:absolute;left:1094px;top:240px;width:10.5px;height:375.7px;background:#ececec"></div>
<div style="position:absolute;left:1098.5px;top:266.9px;width:2px;height:23.1px;background:#777;border-radius:1px"></div>
<div style="position:absolute;left:355.2px;top:615.7px;width:749.3px;height:10.8px;background:#ececec"></div>
<div style="position:absolute;left:367.1px;top:620.8px;width:339.2px;height:1.7px;background:#6e6e6e;border-radius:1px"></div>
<svg style="position:absolute;left:364px;top:224px" width="116" height="13" viewBox="0 0 116 13"><path d="M0.5 3 H5 L6.5 4.5 H13 V12 H0.5Z" fill="#a9c6e0" stroke="#7aa0c4" stroke-width="0.8"/><rect x="21" y="1.5" width="10" height="10.5" rx="1" fill="#3a6fa0"/><rect x="23" y="1.5" width="6" height="4" fill="#c8dcee"/><rect x="23.5" y="8" width="5" height="4" fill="#d8e6f2"/><rect x="39" y="1" width="1" height="11" fill="#c8c8c8"/><path d="M44 11 L49 6 L52 9 L47 12Z" fill="#d9a441"/><path d="M50 5 L55 1" stroke="#7a5a2a" stroke-width="1.5"/><circle cx="68" cy="6" r="4" fill="none" stroke="#555" stroke-width="1.1"/><path d="M71 9 L74.5 12.5" stroke="#555" stroke-width="1.4"/><rect x="82.5" y="0.5" width="12" height="12" rx="1" fill="#f0f0f0" stroke="#888" stroke-width="0.9"/><path d="M87 3 H91.5 M89 3 V10.5 M91 3 V10.5 M89 3 A2 2 0 0 0 89 7" fill="none" stroke="#333" stroke-width="1"/><rect x="102.5" y="0.5" width="12" height="12" rx="1" fill="#f0f0f0" stroke="#888" stroke-width="0.9"/><path d="M105 4 H112 V8 H106 M107.5 6.5 L105.5 8 L107.5 9.5" fill="none" stroke="#333" stroke-width="1"/></svg>
<div style="position:absolute;left:249.2px;top:634.1px;width:44.8px;height:15.2px;background:#ffffff"></div>
<div style="position:absolute;left:294px;top:634.1px;width:817.5px;height:15.2px;background:#e6e6e6"></div>
<div style="position:absolute;left:254.80px;top:635.45px;line-height:11px;font-size:8.8px;font-family:'Liberation Sans', sans-serif;font-weight:400;color:#3d78b4;letter-spacing:0.000px;white-space:pre;transform:scaleX(0.9231);transform-origin:0 0;">Routine</div>
<div style="position:absolute;left:997.7px;top:653.7px;width:51.9px;height:15.1px;background:#fdfdfd;border:1px solid #cfcfcf;box-sizing:border-box;border-radius:2px"></div>
<div style="position:absolute;left:1056.3px;top:653.7px;width:52.2px;height:15.1px;background:#fdfdfd;border:1px solid #cfcfcf;box-sizing:border-box;border-radius:2px"></div>
<div style="position:absolute;left:1014.00px;top:655.18px;line-height:12px;font-size:9px;font-family:'Liberation Sans', sans-serif;font-weight:400;color:#222;letter-spacing:0.000px;white-space:pre;transform:scaleX(0.8661);transform-origin:0 0;">Apply</div>
<div style="position:absolute;left:1069.50px;top:655.18px;line-height:12px;font-size:9px;font-family:'Liberation Sans', sans-serif;font-weight:400;color:#222;letter-spacing:0.000px;white-space:pre;transform:scaleX(0.9620);transform-origin:0 0;">Revert</div>
<svg style="position:absolute;left:1087px;top:678px" width="17" height="12" viewBox="0 0 17 12"><path d="M1 1V11M16 1V11" stroke="#c8c8c8" stroke-width="0.8"/><rect x="4.5" y="2" width="9" height="8" fill="#e0e0e0" stroke="#aaa" stroke-width="0.8"/><path d="M10 2V10" stroke="#aaa"/></svg>
<div style="position:absolute;left:405.7px;top:376.8px;width:686.5px;height:14.7px;background:#ececec"></div>
<div style="position:absolute;left:526.2px;top:376.8px;width:80.5px;height:14.7px;background:#b8d0e8"></div>
<div style="position:absolute;left:355.2px;top:240px;width:738.8px;height:375.7px;overflow:hidden">
<div style="position:absolute;left:12.70px;top:0.97px;line-height:15px;font-size:9.5px;font-family:'Liberation Mono',monospace;letter-spacing:-0.645px;color:#4a7598;white-space:pre">16</div>
<div style="position:absolute;left:50.40px;top:0.97px;line-height:15px;font-size:9.5px;font-family:'Liberation Mono',monospace;letter-spacing:-0.645px;white-space:pre">        <span style="color:#2f87c6;font-weight:700">SET</span> <span style="color:#383838">ERRMSG</span> <span style="color:#383838">=</span> <span style="color:#383838">@E2</span><span style="color:#383838">;</span></div>
<div style="position:absolute;left:12.70px;top:16.17px;line-height:15px;font-size:9.5px;font-family:'Liberation Mono',monospace;letter-spacing:-0.645px;color:#4a7598;white-space:pre">17</div>
<div style="position:absolute;left:50.40px;top:16.17px;line-height:15px;font-size:9.5px;font-family:'Liberation Mono',monospace;letter-spacing:-0.645px;white-space:pre"><span style="color:#4c9bd3">        #SELECT @E1, @E2 INTO @ERRNO, @ERRMSG;</span></div>
<div style="position:absolute;left:12.70px;top:31.37px;line-height:15px;font-size:9.5px;font-family:'Liberation Mono',monospace;letter-spacing:-0.645px;color:#4a7598;white-space:pre">18</div>
<div style="position:absolute;left:50.40px;top:31.37px;line-height:15px;font-size:9.5px;font-family:'Liberation Mono',monospace;letter-spacing:-0.645px;white-space:pre">    <span style="color:#2f87c6;font-weight:700">END</span><span style="color:#383838">;</span></div>
<div style="position:absolute;left:12.70px;top:46.57px;line-height:15px;font-size:9.5px;font-family:'Liberation Mono',monospace;letter-spacing:-0.645px;color:#4a7598;white-space:pre">19</div>
<div style="position:absolute;left:50.40px;top:46.57px;line-height:15px;font-size:9.5px;font-family:'Liberation Mono',monospace;letter-spacing:-0.645px;white-space:pre"><span style="color:#2f87c6;font-weight:700">START</span> <span style="color:#2f87c6;font-weight:700">TRANSACTION</span><span style="color:#383838">;</span></div>
<div style="position:absolute;left:12.70px;top:61.77px;line-height:15px;font-size:9.5px;font-family:'Liberation Mono',monospace;letter-spacing:-0.645px;color:#4a7598;white-space:pre">20</div>
<div style="position:absolute;left:50.40px;top:61.77px;line-height:15px;font-size:9.5px;font-family:'Liberation Mono',monospace;letter-spacing:-0.645px;white-space:pre"><span style="color:#4c9bd3">/* ------------------VIEW MASTER NAME START--------------------- */</span></div>
<div style="position:absolute;left:12.70px;top:76.97px;line-height:15px;font-size:9.5px;font-family:'Liberation Mono',monospace;letter-spacing:-0.645px;color:#4a7598;white-space:pre">21</div>
<div style="position:absolute;left:50.40px;top:76.97px;line-height:15px;font-size:9.5px;font-family:'Liberation Mono',monospace;letter-spacing:-0.645px;white-space:pre"><span style="color:#4c9bd3">/*</span></div>
<div style="position:absolute;left:12.70px;top:92.17px;line-height:15px;font-size:9.5px;font-family:'Liberation Mono',monospace;letter-spacing:-0.645px;color:#4a7598;white-space:pre">22</div>
<div style="position:absolute;left:50.40px;top:92.17px;line-height:15px;font-size:9.5px;font-family:'Liberation Mono',monospace;letter-spacing:-0.645px;white-space:pre"><span style="color:#4c9bd3">/api-get-view-master-name-info/</span></div>
<div style="position:absolute;left:12.70px;top:107.37px;line-height:15px;font-size:9.5px;font-family:'Liberation Mono',monospace;letter-spacing:-0.645px;color:#4a7598;white-space:pre">23</div>
<div style="position:absolute;left:50.40px;top:107.37px;line-height:15px;font-size:9.5px;font-family:'Liberation Mono',monospace;letter-spacing:-0.645px;white-space:pre"><span style="color:#4c9bd3">CALL USP_GET_ALL_MASTER_DATA(&#x27;VIEW_MASTER_NAME&#x27;,&#x27;VIEW_ALL&#x27;,&#x27;0&#x27;,@ERRNO,@ERRMSG);</span></div>
<div style="position:absolute;left:12.70px;top:122.57px;line-height:15px;font-size:9.5px;font-family:'Liberation Mono',monospace;letter-spacing:-0.645px;color:#4a7598;white-space:pre">24</div>
<div style="position:absolute;left:50.40px;top:122.57px;line-height:15px;font-size:9.5px;font-family:'Liberation Mono',monospace;letter-spacing:-0.645px;white-space:pre"><span style="color:#4c9bd3">*/</span></div>
<div style="position:absolute;left:12.70px;top:137.77px;line-height:15px;font-size:9.5px;font-family:'Liberation Mono',monospace;letter-spacing:-0.645px;color:#4a7598;white-space:pre">25</div>
<div style="position:absolute;left:50.40px;top:137.77px;line-height:15px;font-size:9.5px;font-family:'Liberation Mono',monospace;letter-spacing:-0.645px;white-space:pre"><span style="color:#2f87c6;font-weight:700">IF</span> <span style="color:#383838">(</span><span style="color:#383838">P_OPERATION_NAME</span> <span style="color:#9a9a9a">=</span> <span style="color:#e39a45">'</span><span style="color:#7d96ad">VIEW_MASTER_NAME</span><span style="color:#e39a45">'</span><span style="color:#383838">)</span> <span style="color:#2f87c6;font-weight:700">THEN</span></div>
<div style="position:absolute;left:12.70px;top:152.97px;line-height:15px;font-size:9.5px;font-family:'Liberation Mono',monospace;letter-spacing:-0.645px;color:#4a7598;white-space:pre">26</div>
<div style="position:absolute;left:50.40px;top:152.97px;line-height:15px;font-size:9.5px;font-family:'Liberation Mono',monospace;letter-spacing:-0.645px;white-space:pre">     <span style="color:#2f87c6;font-weight:700">IF</span> <span style="color:#383838">(</span><span style="color:#383838">P_ITEM</span> <span style="color:#9a9a9a">=</span> <span style="color:#e39a45">&#x27;VIEW_ALL&#x27;</span><span style="color:#383838">)</span> <span style="color:#2f87c6;font-weight:700">THEN</span></div>
<div style="position:absolute;left:12.70px;top:168.17px;line-height:15px;font-size:9.5px;font-family:'Liberation Mono',monospace;letter-spacing:-0.645px;color:#4a7598;white-space:pre">27</div>
<div style="position:absolute;left:50.40px;top:168.17px;line-height:15px;font-size:9.5px;font-family:'Liberation Mono',monospace;letter-spacing:-0.645px;white-space:pre">        <span style="color:#2f87c6;font-weight:700">DROP</span> <span style="color:#2f87c6;font-weight:700">TEMPORARY</span> <span style="color:#2f87c6;font-weight:700">TABLE</span> <span style="color:#2f87c6;font-weight:700">IF</span> <span style="color:#2f87c6;font-weight:700">EXISTS</span> <span style="color:#383838">TEMP_VIEW_MASTER_NAME</span><span style="color:#383838">;</span></div>
<div style="position:absolute;left:12.70px;top:183.37px;line-height:15px;font-size:9.5px;font-family:'Liberation Mono',monospace;letter-spacing:-0.645px;color:#4a7598;white-space:pre">28</div>
<div style="position:absolute;left:50.40px;top:183.37px;line-height:15px;font-size:9.5px;font-family:'Liberation Mono',monospace;letter-spacing:-0.645px;white-space:pre">        <span style="color:#2f87c6;font-weight:700">CREATE</span> <span style="color:#2f87c6;font-weight:700">TEMPORARY</span> <span style="color:#2f87c6;font-weight:700">TABLE</span> <span style="color:#383838">TEMP_VIEW_MASTER_NAME</span></div>
<div style="position:absolute;left:12.70px;top:198.57px;line-height:15px;font-size:9.5px;font-family:'Liberation Mono',monospace;letter-spacing:-0.645px;color:#4a7598;white-space:pre">29</div>
<div style="position:absolute;left:50.40px;top:198.57px;line-height:15px;font-size:9.5px;font-family:'Liberation Mono',monospace;letter-spacing:-0.645px;white-space:pre">        <span style="color:#2f87c6;font-weight:700">SELECT</span> <span style="color:#383838">MASTER_NAME_SYS_ID</span><span style="color:#383838">,</span><span style="color:#383838">MASTER_NAME</span></div>
<div style="position:absolute;left:12.70px;top:213.77px;line-height:15px;font-size:9.5px;font-family:'Liberation Mono',monospace;letter-spacing:-0.645px;color:#4a7598;white-space:pre">30</div>
<div style="position:absolute;left:50.40px;top:213.77px;line-height:15px;font-size:9.5px;font-family:'Liberation Mono',monospace;letter-spacing:-0.645px;white-space:pre">        <span style="color:#2f87c6;font-weight:700">FROM</span> <span style="color:#383838">TBL_MST_MASTER_NAME</span></div>
<div style="position:absolute;left:12.70px;top:228.97px;line-height:15px;font-size:9.5px;font-family:'Liberation Mono',monospace;letter-spacing:-0.645px;color:#4a7598;white-space:pre">31</div>
<div style="position:absolute;left:50.40px;top:228.97px;line-height:15px;font-size:9.5px;font-family:'Liberation Mono',monospace;letter-spacing:-0.645px;white-space:pre">        <span style="color:#2f87c6;font-weight:700">WHERE</span> <span style="color:#383838">ISACTIVE</span><span style="color:#9a9a9a">=</span><span style="color:#e39a45">1</span></div>
<div style="position:absolute;left:12.70px;top:244.17px;line-height:15px;font-size:9.5px;font-family:'Liberation Mono',monospace;letter-spacing:-0.645px;color:#4a7598;white-space:pre">32</div>
<div style="position:absolute;left:50.40px;top:244.17px;line-height:15px;font-size:9.5px;font-family:'Liberation Mono',monospace;letter-spacing:-0.645px;white-space:pre">        <span style="color:#2f87c6;font-weight:700">ORDER</span> <span style="color:#2f87c6;font-weight:700">BY</span> <span style="color:#383838">MASTER_NAME</span> <span style="color:#2f87c6;font-weight:700">ASC</span><span style="color:#383838">;</span></div>
<div style="position:absolute;left:12.70px;top:259.37px;line-height:15px;font-size:9.5px;font-family:'Liberation Mono',monospace;letter-spacing:-0.645px;color:#4a7598;white-space:pre">33</div>
<div style="position:absolute;left:50.40px;top:259.37px;line-height:15px;font-size:9.5px;font-family:'Liberation Mono',monospace;letter-spacing:-0.645px;white-space:pre">        <span style="color:#2f87c6;font-weight:700">SELECT</span> <span style="color:#a89c8c">COUNT</span><span style="color:#383838">(</span><span style="color:#383838">*</span><span style="color:#383838">)</span> <span style="color:#2f87c6;font-weight:700">INTO</span> <span style="color:#383838">V_ROW_CNT</span> <span style="color:#2f87c6;font-weight:700">FROM</span> <span style="color:#383838">TEMP_VIEW_MASTER_NAME</span><span style="color:#383838">;</span></div>
<div style="position:absolute;left:12.70px;top:274.57px;line-height:15px;font-size:9.5px;font-family:'Liberation Mono',monospace;letter-spacing:-0.645px;color:#4a7598;white-space:pre">34</div>
<div style="position:absolute;left:50.40px;top:274.57px;line-height:15px;font-size:9.5px;font-family:'Liberation Mono',monospace;letter-spacing:-0.645px;white-space:pre">        <span style="color:#2f87c6;font-weight:700">IF</span> <span style="color:#383838">(</span><span style="color:#383838">V_ROW_CNT</span> <span style="color:#9a9a9a">!</span><span style="color:#9a9a9a">=</span> <span style="color:#e39a45">0</span><span style="color:#383838">)</span> <span style="color:#2f87c6;font-weight:700">THEN</span></div>
<div style="position:absolute;left:12.70px;top:289.77px;line-height:15px;font-size:9.5px;font-family:'Liberation Mono',monospace;letter-spacing:-0.645px;color:#4a7598;white-space:pre">35</div>
<div style="position:absolute;left:50.40px;top:289.77px;line-height:15px;font-size:9.5px;font-family:'Liberation Mono',monospace;letter-spacing:-0.645px;white-space:pre">            <span style="color:#2f87c6;font-weight:700">SELECT</span> <span style="color:#383838">JSON_OBJECT</span><span style="color:#383838">(</span><span style="color:#e39a45">&#x27;status&#x27;</span><span style="color:#383838">,</span> <span style="color:#e39a45">&#x27;true&#x27;</span><span style="color:#383838">,</span> <span style="color:#e39a45">&#x27;response&#x27;</span><span style="color:#383838">,</span> <span style="color:#383838">JSON_ARRAYAGG</span><span style="color:#383838">(</span><span style="color:#383838">JSON_OBJECT</span><span style="color:#383838">(</span></div>
<div style="position:absolute;left:12.70px;top:304.97px;line-height:15px;font-size:9.5px;font-family:'Liberation Mono',monospace;letter-spacing:-0.645px;color:#4a7598;white-space:pre">36</div>
<div style="position:absolute;left:50.40px;top:304.97px;line-height:15px;font-size:9.5px;font-family:'Liberation Mono',monospace;letter-spacing:-0.645px;white-space:pre">            <span style="color:#e39a45">&#x27;MASTER_NAME_SYS_ID&#x27;</span><span style="color:#383838">,</span><span style="color:#383838">MASTER_NAME_SYS_ID</span><span style="color:#383838">,</span><span style="color:#e39a45">&#x27;MASTER_NAME&#x27;</span><span style="color:#383838">,</span><span style="color:#383838">MASTER_NAME</span></div>
<div style="position:absolute;left:12.70px;top:320.17px;line-height:15px;font-size:9.5px;font-family:'Liberation Mono',monospace;letter-spacing:-0.645px;color:#4a7598;white-space:pre">37</div>
<div style="position:absolute;left:50.40px;top:320.17px;line-height:15px;font-size:9.5px;font-family:'Liberation Mono',monospace;letter-spacing:-0.645px;white-space:pre">            <span style="color:#383838">)</span><span style="color:#383838">)</span><span style="color:#383838">)</span> <span style="color:#2f87c6;font-weight:700">AS</span> <span style="color:#383838">JSON_VALUE</span></div>
<div style="position:absolute;left:12.70px;top:335.37px;line-height:15px;font-size:9.5px;font-family:'Liberation Mono',monospace;letter-spacing:-0.645px;color:#4a7598;white-space:pre">38</div>
<div style="position:absolute;left:50.40px;top:335.37px;line-height:15px;font-size:9.5px;font-family:'Liberation Mono',monospace;letter-spacing:-0.645px;white-space:pre">            <span style="color:#2f87c6;font-weight:700">FROM</span> <span style="color:#383838">TEMP_VIEW_MASTER_NAME</span><span style="color:#383838">;</span></div>
<div style="position:absolute;left:12.70px;top:350.57px;line-height:15px;font-size:9.5px;font-family:'Liberation Mono',monospace;letter-spacing:-0.645px;color:#4a7598;white-space:pre">39</div>
<div style="position:absolute;left:50.40px;top:350.57px;line-height:15px;font-size:9.5px;font-family:'Liberation Mono',monospace;letter-spacing:-0.645px;white-space:pre">        <span style="color:#2f87c6;font-weight:700">ELSE</span></div>
<div style="position:absolute;left:12.70px;top:365.77px;line-height:15px;font-size:9.5px;font-family:'Liberation Mono',monospace;letter-spacing:-0.645px;color:#4a7598;white-space:pre">40</div>
<div style="position:absolute;left:50.40px;top:365.77px;line-height:15px;font-size:9.5px;font-family:'Liberation Mono',monospace;letter-spacing:-0.645px;white-space:pre">            <span style="color:#2f87c6;font-weight:700">SELECT</span> <span style="color:#383838">JSON_OBJECT</span><span style="color:#383838">(</span><span style="color:#e39a45">&#x27;status&#x27;</span><span style="color:#383838">,</span> <span style="color:#e39a45">&#x27;false&#x27;</span><span style="color:#383838">,</span> <span style="color:#e39a45">&#x27;response&#x27;</span> <span style="color:#383838">,</span> <span style="color:#e39a45">&#x27;No Data Found&#x27;</span><span style="color:#383838">)</span> <span style="color:#2f87c6;font-weight:700">AS</span> <span style="color:#383838">JSON_VALUE</span><span style="color:#383838">;</span></div>
</div>
<div style="position:absolute;left:396.2px;top:240px;width:1px;height:375.7px;background:#c9c9c9"></div>
<svg style="position:absolute;left:392px;top:319.7px" width="9" height="9" viewBox="0 0 9 9"><circle cx="4.5" cy="4.5" r="3.8" fill="#fff" stroke="#b5b5b5" stroke-width="0.9"/><path d="M2.5 4.5H6.5" stroke="#999" stroke-width="0.9"/></svg>
<svg style="position:absolute;left:392px;top:380.5px" width="9" height="9" viewBox="0 0 9 9"><circle cx="4.5" cy="4.5" r="3.8" fill="#fff" stroke="#b5b5b5" stroke-width="0.9"/><path d="M2.5 4.5H6.5" stroke="#999" stroke-width="0.9"/></svg>
<svg style="position:absolute;left:392px;top:395.7px" width="9" height="9" viewBox="0 0 9 9"><circle cx="4.5" cy="4.5" r="3.8" fill="#fff" stroke="#b5b5b5" stroke-width="0.9"/><path d="M2.5 4.5H6.5" stroke="#999" stroke-width="0.9"/></svg>
<svg style="position:absolute;left:392px;top:517.3px" width="9" height="9" viewBox="0 0 9 9"><circle cx="4.5" cy="4.5" r="3.8" fill="#fff" stroke="#b5b5b5" stroke-width="0.9"/><path d="M2.5 4.5H6.5" stroke="#999" stroke-width="0.9"/></svg>
<svg style="position:absolute;left:392px;top:532.5px" width="9" height="9" viewBox="0 0 9 9"><circle cx="4.5" cy="4.5" r="3.8" fill="#fff" stroke="#b5b5b5" stroke-width="0.9"/><path d="M2.5 4.5H6.5" stroke="#999" stroke-width="0.9"/></svg>
<div style="position:absolute;left:397px;top:277.59999999999997px;width:3px;height:1px;background:#c9c9c9"></div>
<div style="position:absolute;left:397px;top:368.79999999999995px;width:3px;height:1px;background:#c9c9c9"></div>
<div style="position:absolute;left:397px;top:566.4px;width:3px;height:1px;background:#c9c9c9"></div>
<svg style="position:absolute;left:554px;top:381px" width="9" height="13" viewBox="0 0 9 13"><path d="M0.5 0.5 V10.5 L3 8.3 L5 12.5 L6.6 11.8 L4.7 7.7 H8 Z" fill="#fff" stroke="#222" stroke-width="0.9"/></svg>
<div style="position:absolute;left:6px;top:691.5px;width:1110px;height:31.5px;background:linear-gradient(90deg,#e3e79f 0%,#e5e9a6 50%,#e3e8a6 100%)"></div>
<div style="position:absolute;left:6px;top:690.6px;width:1110px;height:1.4px;background:#c8cab2"></div>
<svg style="position:absolute;left:339px;top:700.5px" width="17" height="17" viewBox="0 0 17 17"><rect x="0" y="0" width="8" height="8" fill="#1e8fd8"/><rect x="9" y="0" width="8" height="8" fill="#2aa0e6"/><rect x="0" y="9" width="8" height="8" fill="#1a7fcc"/><rect x="9" y="9" width="8" height="8" fill="#1e8fd8"/></svg>
<div style="position:absolute;left:367.3px;top:698px;width:69.7px;height:21.7px;background:#f4f5dc;border-radius:11px"></div>
<svg style="position:absolute;left:383px;top:704px" width="10" height="10" viewBox="0 0 10 10"><circle cx="5.8" cy="4" r="3.2" fill="none" stroke="#222" stroke-width="1.1"/><path d="M3.5 6.3 L0.8 9.2" stroke="#222" stroke-width="1.2"/></svg>
<div style="position:absolute;left:396.60px;top:703.01px;line-height:12px;font-size:9.5px;font-family:'Liberation Sans', sans-serif;font-weight:400;color:#222;letter-spacing:0.000px;white-space:pre;transform:scaleX(0.8704);transform-origin:0 0;">Search</div>
<svg style="position:absolute;left:448px;top:701px" width="17" height="16" viewBox="0 0 17 16"><rect x="6" y="1" width="10" height="10" fill="#d8d8d8" stroke="#bbb" stroke-width="0.6"/><rect x="1" y="5" width="10" height="10" fill="#1a1a1a"/></svg>
<svg style="position:absolute;left:479.5px;top:700.5px" width="17" height="17" viewBox="0 0 17 17"><circle cx="8.5" cy="8.5" r="8" fill="#7b6ad8"/><rect x="4" y="6" width="6" height="5" rx="1" fill="#fff"/><path d="M10 8.5 L13 6.5 V10.5Z" fill="#fff"/></svg>
<svg style="position:absolute;left:511px;top:701px" width="19" height="16" viewBox="0 0 19 16"><path d="M0.5 1 H7 L9 3 H18.5 V15 H0.5Z" fill="#f2b92e"/><rect x="0.5" y="5" width="18" height="10" fill="#fcd34a"/><rect x="4" y="11" width="11" height="2" fill="#1e7fd0"/></svg>
<svg style="position:absolute;left:543px;top:700px" width="18" height="18" viewBox="0 0 18 18"><defs><linearGradient id="eg" x1="0" y1="1" x2="1" y2="0"><stop offset="0" stop-color="#0b5fb8"/><stop offset="0.55" stop-color="#1d9be0"/><stop offset="1" stop-color="#5ad36a"/></linearGradient></defs><circle cx="9" cy="9" r="8.6" fill="url(#eg)"/><path d="M5.2 11.2 Q5 7.2 9.8 7 Q13.6 7.2 13.4 10.6 Q10.5 12.6 9.5 10 Q8.5 8.6 7.6 10 Q7.2 13.5 12 14.6 Q8 16.5 5.2 11.2Z" fill="#e4e8a2"/></svg>
<svg style="position:absolute;left:575px;top:700px" width="17" height="18" viewBox="0 0 17 18"><rect x="0.5" y="3" width="16" height="14.5" rx="2" fill="#1c3f72"/><path d="M5 3 V1.5 H12 V3" fill="none" stroke="#1c3f72" stroke-width="1.2"/><rect x="5" y="7" width="3" height="3" fill="#f25022"/><rect x="9" y="7" width="3" height="3" fill="#7fba00"/><rect x="5" y="11" width="3" height="3" fill="#00a4ef"/><rect x="9" y="11" width="3" height="3" fill="#ffb900"/></svg>
<svg style="position:absolute;left:607px;top:700.5px" width="17" height="17" viewBox="0 0 17 17"><rect x="0" y="0" width="17" height="17" rx="2" fill="#1f8fd8"/><path d="M5 3 V13 H12" fill="none" stroke="#fff" stroke-width="2.6"/></svg>
<svg style="position:absolute;left:639px;top:700px" width="17" height="18" viewBox="0 0 17 18"><path d="M0.8 2.2 L8.5 0.3 L16.2 2.2 V11.5 Q16 15.3 8.5 17.7 Q1 15.3 0.8 11.5Z" fill="#c62828"/><path d="M3.6 4.6 L8.5 8.2 L13.4 4.6 V11.2 Q13.2 13.4 8.5 15 Q3.8 13.4 3.6 11.2Z" fill="#e4e8a2"/></svg>
<svg style="position:absolute;left:670px;top:700px" width="20" height="18" viewBox="0 0 20 18"><circle cx="14" cy="4" r="2.5" fill="#7b83eb"/><rect x="10" y="6" width="8.5" height="8" rx="3" fill="#7b83eb"/><rect x="1" y="4" width="11" height="11" rx="1.5" fill="#5059c9"/><path d="M3.5 7 H9.5 M6.5 7 V13" stroke="#fff" stroke-width="1.6"/><circle cx="16" cy="3.5" r="3" fill="#d92d2d" stroke="#e4e79c" stroke-width="0.8"/><path d="M14.5 3.5H17.5" stroke="#fff" stroke-width="0.9"/></svg>
<div style="position:absolute;left:677px;top:719.5px;width:5px;height:1.2px;background:#777"></div>
<svg style="position:absolute;left:702px;top:700.5px" width="18" height="18" viewBox="0 0 18 18"><rect x="0" y="0" width="18" height="18" fill="#ef443b"/><path d="M6 5 L10 9 L6 13 L2 9Z M10.5 5 L14.5 9 L10.5 13 L9 11.5 L11.5 9 L9 6.5Z" fill="#fff"/></svg>
<div style="position:absolute;left:729px;top:697.5px;width:26.3px;height:24px;background:rgba(255,255,255,.35);border-radius:3px"></div>
<svg style="position:absolute;left:734px;top:700.5px" width="18" height="17" viewBox="0 0 18 17"><rect x="0" y="0" width="18" height="17" rx="2" fill="#1f4f7a"/><path d="M3 14 C4 7 7 4 9 3 C12 5 14 9 15 15" fill="none" stroke="#a9cde8" stroke-width="1"/><path d="M5 14 L5 6" stroke="#a9cde8" stroke-width="0.8"/></svg>
<div style="position:absolute;left:736px;top:719.5px;width:14px;height:2px;background:#1f78d0;border-radius:1px"></div>
<svg style="position:absolute;left:766px;top:700.5px" width="18" height="18" viewBox="0 0 18 18"><circle cx="9" cy="9" r="8.5" fill="#db4437"/><path d="M9 9 L1.6 13.3 A8.5 8.5 0 0 0 13.3 16.4Z" fill="#0f9d58"/><path d="M9 9 L13.3 16.4 A8.5 8.5 0 0 0 17.2 5 L9 5Z" fill="#f4b400"/><circle cx="9" cy="9" r="3.8" fill="#fff"/><circle cx="9" cy="9" r="3" fill="#4285f4"/></svg>
<div style="position:absolute;left:772px;top:719.5px;width:5px;height:1.2px;background:#777"></div>
<svg style="position:absolute;left:892px;top:704px" width="10" height="7" viewBox="0 0 10 7"><path d="M0.7 6 L5 1.5 L9.3 6" fill="none" stroke="#222" stroke-width="1.1"/></svg>
<svg style="position:absolute;left:907px;top:703.5px" width="14" height="9" viewBox="0 0 14 9"><path d="M3 8.5 H11.5 A2.5 2.5 0 0 0 11.5 3.5 A4 4 0 0 0 4 3 A3 3 0 0 0 3 8.5Z" fill="#1c8ad8"/></svg>
<div style="position:absolute;left:924.3px;top:696px;width:21.2px;height:25px;background:rgba(255,255,255,.45);border-radius:3px"></div>
<svg style="position:absolute;left:928.5px;top:702px" width="13" height="13" viewBox="0 0 13 13"><rect x="4.5" y="0.7" width="4" height="7" rx="2" fill="none" stroke="#222" stroke-width="0.9"/><path d="M2.5 6 Q2.5 10 6.5 10 Q10.5 10 10.5 6 M6.5 10 V12.5" fill="none" stroke="#222" stroke-width="0.9"/><path d="M1 1 L12 12" stroke="#222" stroke-width="0.9"/></svg>
<div style="position:absolute;left:953.60px;top:698.05px;line-height:11px;font-size:8.5px;font-family:'Liberation Sans', sans-serif;font-weight:400;color:#222;letter-spacing:0.000px;white-space:pre;transform:scaleX(0.9121);transform-origin:0 0;">ENG</div>
<div style="position:absolute;left:958.00px;top:709.85px;line-height:11px;font-size:8.5px;font-family:'Liberation Sans', sans-serif;font-weight:400;color:#222;letter-spacing:0.000px;white-space:pre;transform:scaleX(0.9882);transform-origin:0 0;">IN</div>
<svg style="position:absolute;left:983px;top:703px" width="13" height="11" viewBox="0 0 13 11"><path d="M0.8 4 Q6.5 -1.5 12.2 4 M2.8 6 Q6.5 2.5 10.2 6 M4.8 8 Q6.5 6.5 8.2 8" fill="none" stroke="#222" stroke-width="1"/><circle cx="6.5" cy="9.8" r="0.9" fill="#222"/></svg>
<svg style="position:absolute;left:1000.5px;top:703px" width="12" height="11" viewBox="0 0 12 11"><path d="M0.7 3.5 H3 L6 0.8 V10.2 L3 7.5 H0.7Z" fill="none" stroke="#222" stroke-width="0.9"/><path d="M8 3.5 L11 7 M11 3.5 L8 7" stroke="#222" stroke-width="0.9"/></svg>
<svg style="position:absolute;left:1018px;top:703px" width="13" height="10" viewBox="0 0 13 10"><rect x="1" y="2" width="10" height="7" rx="1" fill="#222"/><rect x="11" y="4" width="1.5" height="3" fill="#222"/><path d="M2 1 L5 4" stroke="#222"/></svg>
<div style="position:absolute;left:1064.00px;top:697.45px;line-height:11px;font-size:8.8px;font-family:'Liberation Sans', sans-serif;font-weight:400;color:#222;letter-spacing:0.000px;white-space:pre;transform:scaleX(0.9536);transform-origin:0 0;">18:04</div>
<div style="position:absolute;left:1041.00px;top:709.05px;line-height:11px;font-size:8.8px;font-family:'Liberation Sans', sans-serif;font-weight:400;color:#222;letter-spacing:0.000px;white-space:pre;transform:scaleX(0.9774);transform-origin:0 0;">05-01-2023</div>
<svg style="position:absolute;left:1091px;top:703px" width="11" height="13" viewBox="0 0 11 13"><path d="M6 1 A5.5 5.5 0 1 0 10.5 9.5 A4.5 4.5 0 0 1 6 1Z" fill="none" stroke="#333" stroke-width="1"/></svg>
<svg style="position:absolute;left:20px;top:704px" width="18" height="12" viewBox="0 0 18 12"><ellipse cx="9" cy="7" rx="8" ry="4.5" fill="#8ea8c8" opacity="0.8"/></svg>
<div style="position:absolute;left:43.00px;top:709.55px;line-height:11px;font-size:8.5px;font-family:'Liberation Sans', sans-serif;font-weight:400;color:#555;letter-spacing:0.000px;white-space:pre;transform:scaleX(0.8819);transform-origin:0 0;">Haze</div>
<div style="position:absolute;left:43.00px;top:697.55px;line-height:11px;font-size:8.5px;font-family:'Liberation Sans', sans-serif;font-weight:400;color:#555;letter-spacing:0.000px;white-space:pre;transform:scaleX(0.9214);transform-origin:0 0;">20°C</div>
<div style="position:absolute;left:13.3px;top:691px;width:119.6px;height:23.6px;background:rgba(40,40,40,.62);border-radius:4px"></div>
<div style="position:absolute;left:19.00px;top:695.00px;line-height:17px;font-size:13px;font-family:'Liberation Sans', sans-serif;font-weight:400;color:#ffffff;letter-spacing:0.000px;white-space:pre;transform:scaleX(0.8916);transform-origin:0 0;">Dhana Sai Sundar M</div>
<div style="position:absolute;left:531px;top:120px;width:304.4px;height:80.4px;background:#141414;border-radius:6px"></div>
<div style="position:absolute;left:523.3px;top:107.2px;width:319.7px;height:88.8px;background:#272727;border-radius:6px;box-shadow:0 2px 6px rgba(0,0,0,.35)"></div>
<div style="position:absolute;left:535.60px;top:122.73px;line-height:16px;font-size:12.6px;font-family:'Liberation Sans', sans-serif;font-weight:400;color:#ffffff;letter-spacing:0.000px;white-space:pre;transform:scaleX(0.9526);transform-origin:0 0;-webkit-text-stroke:0.35px #ffffff;">Couldn&#x27;t find a speaker</div>
<svg style="position:absolute;left:816px;top:124px" width="13" height="13" viewBox="0 0 13 13"><path d="M0.6 0.6 L12.4 12.4 M12.4 0.6 L0.6 12.4" stroke="#cfcfcf" stroke-width="1.1"/></svg>
<div style="position:absolute;left:535.60px;top:149.45px;line-height:18px;font-size:14px;font-family:'Liberation Sans', sans-serif;font-weight:400;color:#bdbdbd;letter-spacing:0.000px;white-space:pre;transform:scaleX(0.9851);transform-origin:0 0;">We didn&#x27;t find any speakers on your PC.</div>
<div style="position:absolute;left:535.60px;top:168.95px;line-height:18px;font-size:14px;font-family:'Liberation Sans', sans-serif;font-weight:400;color:#bdbdbd;letter-spacing:0.000px;white-space:pre;transform:scaleX(0.9866);transform-origin:0 0;">Connect a speaker to listen in.</div>
<div style="position:absolute;left:1116px;top:150px;width:250px;height:360px;background:radial-gradient(circle at 124.5px 178.5px, rgba(80,84,140,.35) 0, rgba(80,84,140,.3) 94px, rgba(60,62,100,.14) 120px, rgba(31,31,31,0) 150px)"></div>
<div style="position:absolute;left:1146px;top:234.3px;width:189px;height:188.5px;border-radius:50%;box-sizing:border-box;border:3.4px solid #7f85f5;background:#1f1f1f"></div>
<div style="position:absolute;left:1153px;top:241px;width:175.5px;height:175.5px;border-radius:50%;background:#e8ddd8"></div>
<div style="position:absolute;left:1182.30px;top:283.20px;line-height:92px;font-size:71px;font-family:'Liberation Sans', sans-serif;font-weight:400;color:#5a3a2b;letter-spacing:0.000px;white-space:pre;transform:scaleX(1.0623);transform-origin:0 0;-webkit-text-stroke:0.9px #5a3a2b;">DM</div>
<div style="position:absolute;left:1187.40px;top:426.34px;line-height:16px;font-size:12px;font-family:'Liberation Sans', sans-serif;font-weight:400;color:#ffffff;letter-spacing:0.000px;white-space:pre;transform:scaleX(0.9551);transform-origin:0 0;-webkit-text-stroke:0.25px #ffffff;">Dhana Sai Sundar M</div>
<div style="position:absolute;left:1120px;top:590px;width:241px;height:132.6px;background:#333333"></div>
<div style="position:absolute;left:1212.7px;top:629px;width:56px;height:56px;border-radius:50%;background:#c9d6dc"></div>
<div style="position:absolute;left:1229.30px;top:643.28px;line-height:29px;font-size:22px;font-family:'Liberation Sans', sans-serif;font-weight:400;color:#1f3d4a;letter-spacing:0.000px;white-space:pre;transform:scaleX(0.8075);transform-origin:0 0;-webkit-text-stroke:0.6px #1f3d4a;">PS</div>
<svg style="position:absolute;left:695px;top:52px" width="20" height="19" viewBox="0 0 20 19"><path d="M4 4.5 Q1.5 5 1.5 8 V14 Q1.5 18 5.5 18 H12 Q14.5 18 15 15.5" fill="none" stroke="#5c5c5c" stroke-width="1.3"/><rect x="4.5" y="1" width="14" height="14" rx="3" fill="none" stroke="#5c5c5c" stroke-width="1.3"/><path d="M8.5 11 L14.5 5 M10 5 H14.5 V9.5" fill="none" stroke="#5c5c5c" stroke-width="1.3"/></svg>
<svg style="position:absolute;left:767px;top:50.5px" width="22" height="20" viewBox="0 0 22 20"><circle cx="7.5" cy="5" r="4" fill="none" stroke="#e6e6e6" stroke-width="1.3"/><circle cx="16.5" cy="6" r="2.8" fill="none" stroke="#e6e6e6" stroke-width="1.3"/><path d="M1 12.5 Q1 11 2.5 11 H12.5 Q14 11 14 12.5 V14 Q14 19 7.5 19 Q1 19 1 14Z" fill="none" stroke="#e6e6e6" stroke-width="1.3"/><path d="M15.5 11 H19.5 Q21 11 21 12.5 V14 Q21 17.5 16.5 17.5" fill="none" stroke="#e6e6e6" stroke-width="1.3"/></svg>
<svg style="position:absolute;left:823px;top:50.5px" width="21" height="21" viewBox="0 0 21 21"><path d="M10.5 1 A9.5 9.5 0 1 1 5.5 18.6 L1.2 19.8 L2.4 15.5 A9.5 9.5 0 0 1 10.5 1Z" fill="none" stroke="#e6e6e6" stroke-width="1.3"/><path d="M6.5 8 H14.5 M6.5 11 H12.5" stroke="#e6e6e6" stroke-width="1.3" stroke-linecap="round"/></svg>
<svg style="position:absolute;left:878px;top:49.5px" width="23" height="22" viewBox="0 0 23 22"><path d="M3 9 V4 Q3 2 4.5 2 Q6 2 6 4 V8 M6 8 V2.5 Q6 0.7 7.5 0.7 Q9 0.7 9 2.5 V8 M9 8 V3 Q9 1.3 10.5 1.3 Q12 1.3 12 3 V9 M12 9 V5 Q12 3.5 13.5 3.5 Q15 3.5 15 5 V11" fill="none" stroke="#e6e6e6" stroke-width="1.2"/><path d="M3 9 V12 Q3 17 8 17 H10" fill="none" stroke="#e6e6e6" stroke-width="1.2"/><circle cx="16" cy="14.5" r="6" fill="#292929" stroke="#e6e6e6" stroke-width="1.2"/><circle cx="14" cy="13" r="0.8" fill="#e6e6e6"/><circle cx="18" cy="13" r="0.8" fill="#e6e6e6"/><path d="M13.5 16 Q16 18.5 18.5 16" fill="none" stroke="#e6e6e6" stroke-width="1.1"/></svg>
<svg style="position:absolute;left:937.5px;top:52.5px" width="17" height="17" viewBox="0 0 17 17"><rect x="0.7" y="0.7" width="15.6" height="15.6" rx="3" fill="none" stroke="#e6e6e6" stroke-width="1.3"/><path d="M8.5 4.5 V12.5 M4.5 8.5 H12.5" stroke="#e6e6e6" stroke-width="1.4"/></svg>
<div style="position:absolute;left:992.9px;top:59px;width:4px;height:4px;border-radius:50%;background:#e6e6e6"></div>
<div style="position:absolute;left:999.7px;top:59px;width:4px;height:4px;border-radius:50%;background:#e6e6e6"></div>
<div style="position:absolute;left:1006.5px;top:59px;width:4px;height:4px;border-radius:50%;background:#e6e6e6"></div>
<svg style="position:absolute;left:1065px;top:51px" width="21" height="20" viewBox="0 0 21 20"><rect x="0" y="4" width="13" height="12" rx="2.5" fill="#5c5c5c"/><path d="M13 8 L20 4.5 V15.5 L13 12Z" fill="#5c5c5c"/><path d="M0.5 0.5 L19 19.5" stroke="#292929" stroke-width="2.5"/><path d="M0.5 0.5 L19 19.5" stroke="#5c5c5c" stroke-width="1"/></svg>
<svg style="position:absolute;left:1121px;top:51px" width="21" height="20" viewBox="0 0 21 20"><path d="M0.5 6.5 Q0.5 5 2 5 H5 L11 0.5 V19.5 L5 15 H2 Q0.5 15 0.5 13.5Z" fill="#5c5c5c"/><path d="M14 7 L19.5 12.5 M19.5 7 L14 12.5" stroke="#5c5c5c" stroke-width="1.3"/></svg>
<svg style="position:absolute;left:1176.5px;top:53px" width="21" height="16" viewBox="0 0 21 16"><rect x="0" y="0" width="20.5" height="15.7" rx="2.5" fill="#ffffff"/><path d="M10.25 12.5 V3.5 M6.5 7 L10.25 3.3 L14 7" fill="none" stroke="#292929" stroke-width="1.4"/></svg>
<svg style="position:absolute;left:1238px;top:64px" width="21" height="10" viewBox="0 0 21 10"><path d="M1 7.5 Q0.5 2.5 10.5 1.5 Q20.5 2.5 20 7.5 Q19.8 9 18 9 H15.5 Q14 9 14 7.5 V5.5 Q10.5 4.5 7 5.5 V7.5 Q7 9 5.5 9 H3 Q1.2 9 1 7.5Z" fill="#ffffff"/></svg>
<svg style="position:absolute;left:1324px;top:65.5px" width="12" height="7" viewBox="0 0 12 7"><path d="M0.7 0.7 L6 6 L11.3 0.7" fill="none" stroke="#ffffff" stroke-width="1.2"/></svg>
<div style="position:absolute;left:0px;top:728px;width:1366px;height:40px;background:linear-gradient(90deg,#213a47 0%,#1f3443 30%,#1e3041 60%,#1c2b44 80%,#1a2848 100%)"></div>
<div style="position:absolute;left:48px;top:728px;width:344px;height:40px;background:#f0f0f0"></div>
<div style="position:absolute;left:89.00px;top:739.48px;line-height:19px;font-size:14.5px;font-family:'Liberation Sans', sans-serif;font-weight:400;color:#1a1a1a;letter-spacing:0.000px;white-space:pre;transform:scaleX(0.9910);transform-origin:0 0;">Type here to search</div>
<svg style="position:absolute;left:16px;top:739.8px" width="16.2" height="16.2" viewBox="0 0 17 17"><path d="M0 2.4 L7 1.4 V8 H0Z M8 1.2 L17 0 V8 H8Z M0 9 H7 V15.6 L0 14.6Z M8 9 H17 V17 L8 15.8Z" fill="#ffffff"/></svg>
<svg style="position:absolute;left:60px;top:739px" width="18" height="18" viewBox="0 0 18 18"><circle cx="10.5" cy="7.5" r="5.7" fill="none" stroke="#1a1a1a" stroke-width="1.3"/><path d="M6.3 11.7 L1 17" stroke="#1a1a1a" stroke-width="1.5"/></svg>
<svg style="position:absolute;left:316px;top:731px" width="74" height="37" viewBox="0 0 74 37"><circle cx="14" cy="13" r="10" fill="#6b5a4c"/><circle cx="10.5" cy="12" r="2.5" fill="#fff"/><circle cx="17" cy="12" r="2.5" fill="#fff"/><circle cx="10.5" cy="12.5" r="1.2" fill="#222"/><circle cx="17" cy="12.5" r="1.2" fill="#222"/><circle cx="36" cy="22" r="11" fill="#7a6a58"/><circle cx="32" cy="20" r="2.5" fill="#fff"/><circle cx="39" cy="20" r="2.5" fill="#fff"/><circle cx="32" cy="20.5" r="1.2" fill="#222"/><circle cx="39" cy="20.5" r="1.2" fill="#222"/><path d="M5 27 l3 -4 l3 4 l-1 4 h-4z" fill="#f0a0c0"/><ellipse cx="61" cy="26" rx="8" ry="9" fill="#9a5a2a"/><path d="M53 21 Q61 15 69 21" fill="#6a3a1a"/><path d="M58 12 Q66 2 72 6 Q66 14 58 12Z" fill="#7ac043"/></svg>
<svg style="position:absolute;left:400px;top:732px" width="32" height="32" viewBox="0 0 32 32"><path d="M8.5 8 V10.5 H18.5 V8 M8.5 23 V20.5 H18.5 V23" fill="none" stroke="#fff" stroke-width="1.1"/><rect x="8.5" y="12.6" width="9.9" height="5.8" fill="none" stroke="#fff" stroke-width="1.2"/><path d="M22.5 8 V10.5 M22.5 16 V23" stroke="#fff" stroke-width="1.2"/><rect x="21.1" y="12.1" width="2.8" height="2.7" fill="#fff"/></svg>
<svg style="position:absolute;left:455px;top:736px" width="26" height="26" viewBox="0 0 26 26"><circle cx="11" cy="11" r="10.5" fill="#db4437"/><path d="M11 11 L1.9 16.25 A10.5 10.5 0 0 0 16.25 20.1Z" fill="#0f9d58"/><path d="M11 11 L16.25 20.1 A10.5 10.5 0 0 0 21.2 6 L11 6Z" fill="#f4b400"/><circle cx="11" cy="11" r="4.6" fill="#fff"/><circle cx="11" cy="11" r="3.7" fill="#4285f4"/><circle cx="19.5" cy="19.5" r="6" fill="#1565c0" stroke="#1c3142" stroke-width="1"/><text x="17" y="22.5" font-size="8" fill="#fff" font-family="Liberation Sans" font-weight="700">P</text></svg>
<svg style="position:absolute;left:505px;top:739px" width="23" height="19" viewBox="0 0 23 19"><path d="M0.5 1 H8.5 L10.5 3 H22.5 V18 H0.5Z" fill="#e9a825"/><rect x="0.5" y="5.5" width="22" height="12.5" fill="#fdd148"/><rect x="5" y="12.5" width="13" height="3" fill="#2b88d8"/></svg>
<svg style="position:absolute;left:552.5px;top:736.5px" width="24" height="24" viewBox="0 0 24 24"><rect x="0" y="0" width="24" height="24" fill="#ef443b"/><path d="M8 7 L13 12 L8 17 L3 12Z M13.5 7 L18.5 12 L13.5 17 L11.8 15.2 L15 12 L11.8 8.8Z" fill="#fff"/></svg>
<div style="position:absolute;left:590px;top:728px;width:45px;height:40px;background:rgba(255,255,255,.2)"></div>
<div style="position:absolute;left:635px;top:728px;width:2px;height:40px;background:rgba(0,0,0,.25)"></div>
<svg style="position:absolute;left:600px;top:736px" width="28" height="25" viewBox="0 0 28 25"><circle cx="19" cy="5" r="3.5" fill="#7b83eb"/><rect x="13" y="8.5" width="12" height="11" rx="4" fill="#7b83eb"/><rect x="1" y="5" width="15" height="15" rx="2" fill="#5059c9"/><path d="M4.5 9 H12.5 M8.5 9 V17" stroke="#fff" stroke-width="2.2"/><circle cx="21.5" cy="19" r="4.5" fill="#e0202d" stroke="#3a4a5c" stroke-width="1"/></svg>
<svg style="position:absolute;left:650px;top:736px" width="25" height="25" viewBox="0 0 25 25"><path d="M18 1 L24 4 V21 L18 24 L7 14 L3 17 L1 16 V9 L3 8 L7 11Z M18 7 L11 12.5 L18 18Z" fill="#2b9ee8"/><path d="M18 1 L24 4 V21 L18 24Z" fill="#1f7fc7"/></svg>
<svg style="position:absolute;left:703px;top:737px" width="18" height="23" viewBox="0 0 18 23"><rect x="0.5" y="0.5" width="17" height="22" rx="1.5" fill="#6f7d8c"/><rect x="2.5" y="2.5" width="13" height="4.5" fill="#b8dcf4"/><g fill="#e6eaee"><rect x="2.5" y="9" width="3.5" height="2.5"/><rect x="7.2" y="9" width="3.5" height="2.5"/><rect x="12" y="9" width="3.5" height="2.5"/><rect x="2.5" y="13" width="3.5" height="2.5"/><rect x="7.2" y="13" width="3.5" height="2.5"/><rect x="12" y="13" width="3.5" height="2.5"/><rect x="2.5" y="17" width="3.5" height="2.5"/><rect x="7.2" y="17" width="3.5" height="2.5"/><rect x="12" y="17" width="3.5" height="2.5"/></g></svg>
<svg style="position:absolute;left:749.5px;top:736px" width="23" height="24" viewBox="0 0 23 24"><rect x="1" y="3" width="17" height="20" fill="#e8f2d0" stroke="#6a8a3a" stroke-width="1"/><rect x="1" y="14" width="17" height="9" fill="#8cc43c"/><path d="M4 8 V16 M7 11 H12" stroke="#333" stroke-width="1.2"/><path d="M9 17 L21 3 L22.5 4.5 L10.5 18.5Z" fill="#e8b040" stroke="#7a5a20" stroke-width="0.6"/></svg>
<div style="position:absolute;left:446.5px;top:766px;width:40.0px;height:2px;background:#76b9ed"></div>
<div style="position:absolute;left:496.5px;top:766px;width:39.5px;height:2px;background:#76b9ed"></div>
<div style="position:absolute;left:545px;top:766px;width:40px;height:2px;background:#76b9ed"></div>
<div style="position:absolute;left:645px;top:766px;width:40px;height:2px;background:#76b9ed"></div>
<div style="position:absolute;left:692px;top:766px;width:40px;height:2px;background:#76b9ed"></div>
<div style="position:absolute;left:740.5px;top:766px;width:40.0px;height:2px;background:#76b9ed"></div>
<div style="position:absolute;left:590px;top:766px;width:45px;height:2px;background:#a8d0f0"></div>
<svg style="position:absolute;left:975px;top:733px" width="27" height="27" viewBox="0 0 27 27"><path d="M12 4 A7 7 0 1 0 19 13 A5.5 5.5 0 0 1 12 4Z" fill="#f5c542"/><circle cx="20.5" cy="4" r="2.2" fill="#e8443a"/><path d="M5 24 H21 A4.5 4.5 0 0 0 21 15 A6 6 0 0 0 10 14 A5 5 0 0 0 5 24Z" fill="#cfe0f0"/></svg>
<div style="position:absolute;left:1008.00px;top:740.15px;line-height:18px;font-size:14px;font-family:'Liberation Sans', sans-serif;font-weight:400;color:#ffffff;letter-spacing:0.000px;white-space:pre;transform:scaleX(0.9270);transform-origin:0 0;">20°C</div>
<div style="position:absolute;left:1046.50px;top:740.15px;line-height:18px;font-size:14px;font-family:'Liberation Sans', sans-serif;font-weight:400;color:#ffffff;letter-spacing:0.000px;white-space:pre;transform:scaleX(0.9179);transform-origin:0 0;">Haze</div>
<svg style="position:absolute;left:1093px;top:743px" width="13" height="8" viewBox="0 0 13 8"><path d="M0.8 7.2 L6.5 1.2 L12.2 7.2" fill="none" stroke="#fff" stroke-width="1.3"/></svg>
<svg style="position:absolute;left:1113px;top:740px" width="19" height="13" viewBox="0 0 19 13"><path d="M4 12.5 H15.5 A3.3 3.3 0 0 0 15.5 6 A5.5 5.5 0 0 0 5.5 5 A4 4 0 0 0 4 12.5Z" fill="#2a8ae0"/></svg>
<svg style="position:absolute;left:1140px;top:738px" width="14" height="20" viewBox="0 0 14 20"><rect x="1" y="6" width="8" height="8" rx="1.5" fill="none" stroke="#fff" stroke-width="1.2"/><path d="M9 9 L12.5 7 V13 L9 11" fill="none" stroke="#fff" stroke-width="1.2"/><path d="M2 3 Q6 0.5 10 3 M2 17 Q6 19.5 10 17" fill="none" stroke="#fff" stroke-width="1.1"/></svg>
<svg style="position:absolute;left:1163px;top:740px" width="17" height="16" viewBox="0 0 17 16"><rect x="4" y="2" width="12" height="9" fill="none" stroke="#fff" stroke-width="1.2"/><path d="M10 11 V14 M6.5 14.5 H13.5" stroke="#fff" stroke-width="1.2"/><path d="M0.5 1 V6 H4" fill="none" stroke="#fff" stroke-width="1.1"/></svg>
<svg style="position:absolute;left:1187px;top:739.5px" width="17" height="16" viewBox="0 0 17 16"><path d="M0.7 5 H3.5 L7.5 1 V14.5 L3.5 10.5 H0.7Z" fill="none" stroke="#fff" stroke-width="1.1"/><circle cx="12.5" cy="11" r="4" fill="#e81123"/><path d="M10.8 9.3 L14.2 12.7 M14.2 9.3 L10.8 12.7" stroke="#fff" stroke-width="1"/></svg>
<div style="position:absolute;left:1213.00px;top:740.47px;line-height:16px;font-size:12.5px;font-family:'Liberation Sans', sans-serif;font-weight:400;color:#ffffff;letter-spacing:0.000px;white-space:pre;transform:scaleX(0.8306);transform-origin:0 0;">ENG</div>
<div style="position:absolute;left:1264.00px;top:730.67px;line-height:16px;font-size:12.5px;font-family:'Liberation Sans', sans-serif;font-weight:400;color:#ffffff;letter-spacing:0.000px;white-space:pre;transform:scaleX(0.8472);transform-origin:0 0;">18:04</div>
<div style="position:absolute;left:1249.00px;top:748.87px;line-height:16px;font-size:12.5px;font-family:'Liberation Sans', sans-serif;font-weight:400;color:#ffffff;letter-spacing:0.000px;white-space:pre;transform:scaleX(0.9071);transform-origin:0 0;">05-01-2023</div>
<svg style="position:absolute;left:1324px;top:738px" width="26" height="28" viewBox="0 0 26 28"><path d="M1 1.8 H17.2 V15 H6.5 L4.5 17 V15 H1Z" fill="#fff"/><path d="M4.3 5.5 H13.8 M4.3 8.5 H13.8 M4.3 11.5 H10.5" stroke="#1c2b48" stroke-width="1.1"/><circle cx="16.6" cy="17.5" r="7.6" fill="#2b2f38" stroke="#8a8f98" stroke-width="0.9"/><path d="M15 14.8 L17.2 13.2 V21.5" fill="none" stroke="#fff" stroke-width="1.5"/></svg>
<div style="position:absolute;left:1361.5px;top:728px;width:1px;height:40px;background:#77849a"></div>
</body></html>
